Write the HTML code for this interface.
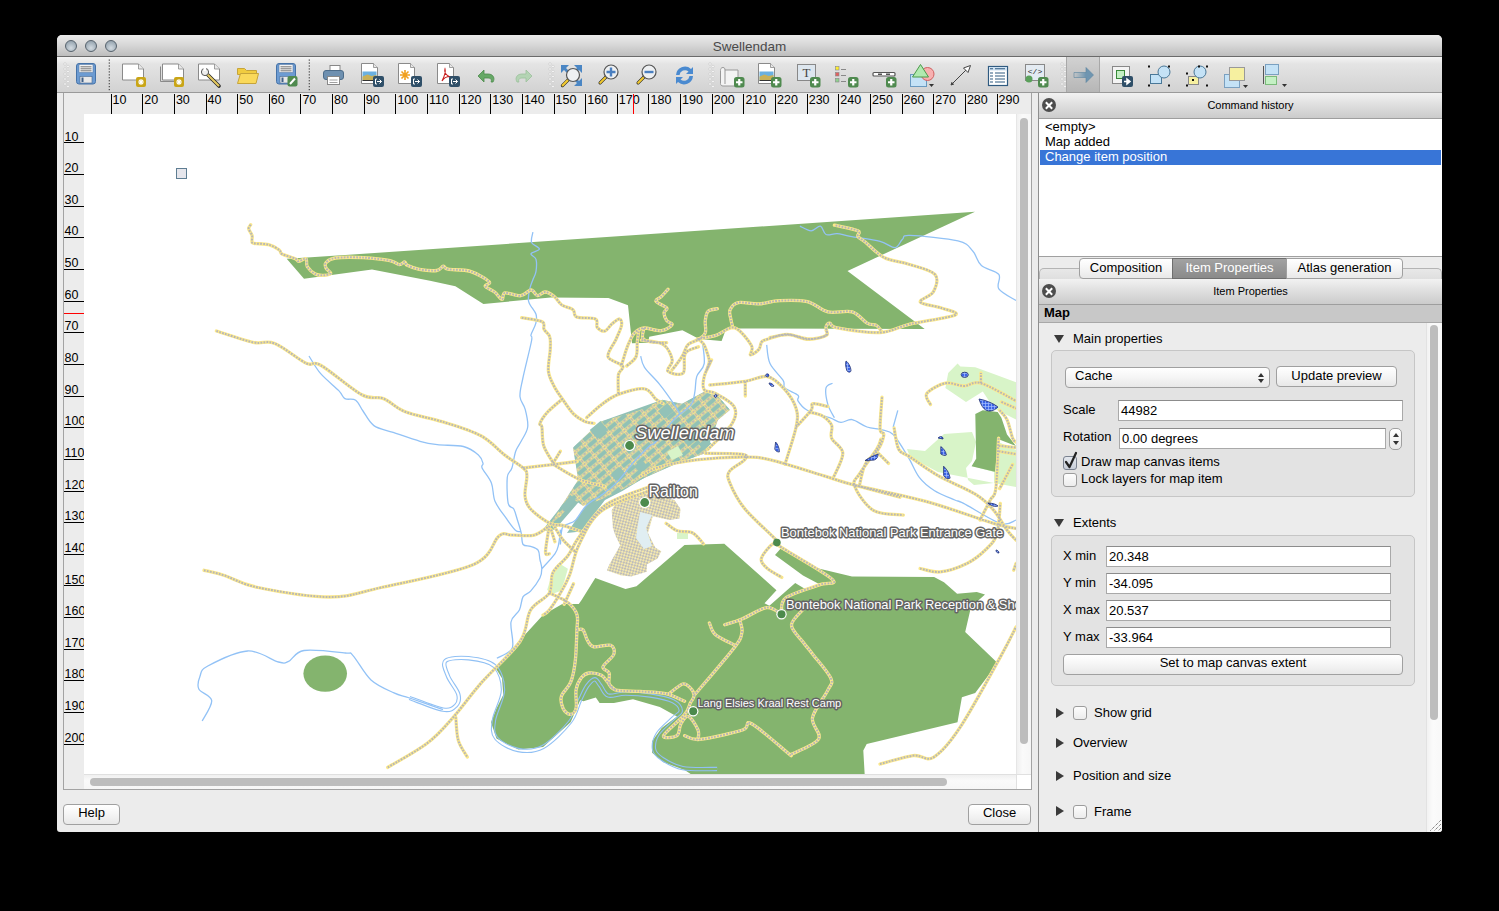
<!DOCTYPE html>
<html><head><meta charset="utf-8">
<style>
*{box-sizing:border-box}
html,body{margin:0;padding:0;width:1499px;height:911px;overflow:hidden;background:#000;font-family:"Liberation Sans",sans-serif;font-size:13px;color:#000}
.a{position:absolute}
#win{position:absolute;left:57px;top:35px;width:1385px;height:797px;background:#ececec;border-radius:5px 5px 3px 3px;overflow:hidden}
#title{position:absolute;left:57px;top:35px;width:1385px;height:22px;background:linear-gradient(#ebebeb,#d6d6d6 50%,#bdbdbd);border-bottom:1px solid #6a6a6a;border-radius:5px 5px 0 0}
#title .t{position:absolute;left:0;width:100%;top:4px;text-align:center;color:#4a4a4a;font-size:13.5px}
.tl{position:absolute;top:5px;width:12px;height:12px;border-radius:50%;background:radial-gradient(circle at 50% 70%,#d3dbe1,#9aa8b3 75%);border:1px solid #56626c}
#tb{position:absolute;left:57px;top:57px;width:1385px;height:36px;background:linear-gradient(#f4f4f4,#e4e4e4 20%,#d2d2d2);border-bottom:1px solid #9a9a9a}
.lbl{position:absolute;white-space:nowrap;line-height:15px}
.btn{position:absolute;border:1px solid #a0a0a0;border-radius:4px;background:linear-gradient(#ffffff,#f6f6f6 45%,#e8e8e8);text-align:center;font-size:13px;line-height:18px}
.inp{position:absolute;background:#fff;border:1px solid #a9a9a9;border-top-color:#8c8c8c;padding-left:2px;line-height:19px;font-size:13px}
.cb{position:absolute;width:14px;height:14px;border:1px solid #9c9c9c;border-radius:3px;background:linear-gradient(#fdfdfd,#ececec)}
.tri-d{position:absolute;width:0;height:0;border-left:5.5px solid transparent;border-right:5.5px solid transparent;border-top:8px solid #3a3a3a}
.tri-r{position:absolute;width:0;height:0;border-top:5.5px solid transparent;border-bottom:5.5px solid transparent;border-left:8px solid #3a3a3a}
.dockhdr{position:absolute;left:1039px;width:403px;background:linear-gradient(#f2f2f2,#dedede 50%,#cbcbcb);border-bottom:1px solid #9e9e9e;text-align:center;font-size:11px;padding-left:20px}
.xbtn{position:absolute;left:3px;width:14px;height:14px;border-radius:50%;background:#4d4d4d}
.xbtn:before,.xbtn:after{content:"";position:absolute;left:6px;top:2.5px;width:2px;height:9px;background:#fff;transform:rotate(45deg)}
.xbtn:after{transform:rotate(-45deg)}
.rn{position:absolute;font-size:12.5px;line-height:13px;white-space:nowrap}
</style></head>
<body>
<div id="win"></div>
<div id="title"><div class="t">Swellendam</div>
  <div class="tl" style="left:8px"></div><div class="tl" style="left:28px"></div><div class="tl" style="left:48px"></div>
</div>
<div id="tb"></div>
<svg class="a" style="left:57px;top:57px" width="1385" height="36" viewBox="57 57 1385 36"><circle cx="65" cy="64" r="1.3" fill="#f8f8f8" stroke="#c4c4c4" stroke-width="0.6"/><circle cx="68" cy="66.5" r="1.3" fill="#f8f8f8" stroke="#c4c4c4" stroke-width="0.6"/><circle cx="65" cy="69" r="1.3" fill="#f8f8f8" stroke="#c4c4c4" stroke-width="0.6"/><circle cx="68" cy="71.5" r="1.3" fill="#f8f8f8" stroke="#c4c4c4" stroke-width="0.6"/><circle cx="65" cy="74" r="1.3" fill="#f8f8f8" stroke="#c4c4c4" stroke-width="0.6"/><circle cx="68" cy="76.5" r="1.3" fill="#f8f8f8" stroke="#c4c4c4" stroke-width="0.6"/><circle cx="65" cy="79" r="1.3" fill="#f8f8f8" stroke="#c4c4c4" stroke-width="0.6"/><circle cx="68" cy="81.5" r="1.3" fill="#f8f8f8" stroke="#c4c4c4" stroke-width="0.6"/><circle cx="65" cy="84" r="1.3" fill="#f8f8f8" stroke="#c4c4c4" stroke-width="0.6"/><circle cx="68" cy="86.5" r="1.3" fill="#f8f8f8" stroke="#c4c4c4" stroke-width="0.6"/><rect x="76.5" y="63.5" width="19" height="20.5" rx="2.5" fill="#6c9bd2" stroke="#4673a8"/><rect x="79" y="64.5" width="14" height="8" fill="#f4f4f4" stroke="#5a7ea8" stroke-width="0.6"/><path d="M80.5 66.8h11M80.5 68.8h11M80.5 70.8h11" stroke="#555" stroke-width="0.8"/><rect x="80" y="76.5" width="12" height="6.5" fill="#e8e8e8" stroke="#4a6a90" stroke-width="0.6"/><rect x="81.5" y="77.5" width="2" height="4.5" fill="#3f5f87"/><rect x="108.7" y="59.5" width="1.2" height="1.2" fill="#444"/><rect x="108.7" y="62.45" width="1.2" height="1.2" fill="#444"/><rect x="108.7" y="65.4" width="1.2" height="1.2" fill="#444"/><rect x="108.7" y="68.35" width="1.2" height="1.2" fill="#444"/><rect x="108.7" y="71.3" width="1.2" height="1.2" fill="#444"/><rect x="108.7" y="74.25" width="1.2" height="1.2" fill="#444"/><rect x="108.7" y="77.2" width="1.2" height="1.2" fill="#444"/><rect x="108.7" y="80.15" width="1.2" height="1.2" fill="#444"/><rect x="108.7" y="83.1" width="1.2" height="1.2" fill="#444"/><rect x="108.7" y="86.05" width="1.2" height="1.2" fill="#444"/><rect x="108.7" y="89.0" width="1.2" height="1.2" fill="#444"/><path d="M122.5 64h16l5 5v11h-21z" fill="#fff" stroke="#8a8a8a" stroke-width="1"/><path d="M138.5 64v5h5" fill="#e8e8e8" stroke="#8a8a8a" stroke-width="0.8"/><rect x="136" y="77" width="10" height="10" rx="2" fill="#c9a516"/><path d="M141 79v6M138 82h6M138.9 79.9l4.2 4.2M143.1 79.9l-4.2 4.2" stroke="#fff" stroke-width="1.1"/><path d="M160.5 66.5v15h18" fill="none" stroke="#8a8a8a"/><path d="M162.5 64h16l5 5v11h-21z" fill="#fff" stroke="#8a8a8a" stroke-width="1"/><path d="M178.5 64v5h5" fill="#e8e8e8" stroke="#8a8a8a" stroke-width="0.8"/><rect x="174" y="77" width="10" height="10" rx="2" fill="#c9a516"/><path d="M179 79v6M176 82h6M176.9 79.9l4.2 4.2M181.1 79.9l-4.2 4.2" stroke="#fff" stroke-width="1.1"/><path d="M198.5 64h16l5 5v11h-21z" fill="#fff" stroke="#8a8a8a" stroke-width="1"/><path d="M214.5 64v5h5" fill="#e8e8e8" stroke="#8a8a8a" stroke-width="0.8"/><path d="M206 73l13 13" stroke="#222" stroke-width="3.6" stroke-linecap="round"/><path d="M207 74l11.5 11.5" stroke="#e4c860" stroke-width="2.2" stroke-linecap="round"/><circle cx="205" cy="72" r="3.6" fill="#eee" stroke="#555"/><rect x="203.5" y="67" width="2.5" height="4" fill="#fff"/><path d="M237.5 68.5h7l2 2h10v4h-19z" fill="#f1cc3f" stroke="#c6a43a"/><path d="M237.5 83.5l3-10h18l-2.5 10z" fill="#fad95a" stroke="#c6a43a"/><rect x="276.5" y="63.5" width="19" height="20.5" rx="2.5" fill="#6c9bd2" stroke="#4673a8"/><rect x="279" y="64.5" width="14" height="8" fill="#f4f4f4" stroke="#5a7ea8" stroke-width="0.6"/><path d="M280.5 66.8h11M280.5 68.8h11M280.5 70.8h11" stroke="#555" stroke-width="0.8"/><rect x="280" y="76.5" width="12" height="6.5" fill="#e8e8e8" stroke="#4a6a90" stroke-width="0.6"/><rect x="281.5" y="77.5" width="2" height="4.5" fill="#3f5f87"/><rect x="287.5" y="76" width="10" height="10.5" rx="2" fill="#4f8a4f"/><path d="M290 84l5-5.5" stroke="#fff" stroke-width="2"/><rect x="308.7" y="59.5" width="1.2" height="1.2" fill="#444"/><rect x="308.7" y="62.45" width="1.2" height="1.2" fill="#444"/><rect x="308.7" y="65.4" width="1.2" height="1.2" fill="#444"/><rect x="308.7" y="68.35" width="1.2" height="1.2" fill="#444"/><rect x="308.7" y="71.3" width="1.2" height="1.2" fill="#444"/><rect x="308.7" y="74.25" width="1.2" height="1.2" fill="#444"/><rect x="308.7" y="77.2" width="1.2" height="1.2" fill="#444"/><rect x="308.7" y="80.15" width="1.2" height="1.2" fill="#444"/><rect x="308.7" y="83.1" width="1.2" height="1.2" fill="#444"/><rect x="308.7" y="86.05" width="1.2" height="1.2" fill="#444"/><rect x="308.7" y="89.0" width="1.2" height="1.2" fill="#444"/><rect x="330" y="65.5" width="10" height="6" fill="#fff" stroke="#888"/><rect x="323.5" y="70.5" width="20" height="9" rx="2.5" fill="#6e90b0" stroke="#4d6c89"/><rect x="327.5" y="76.5" width="12" height="8" fill="#fff" stroke="#888"/><path d="M329.5 80h8M329.5 82.5h8" stroke="#888" stroke-width="0.8"/><path d="M361.5 63.5h12l4 4v16h-16z" fill="#fff" stroke="#8a8a8a" stroke-width="1"/><path d="M373.5 63.5v4h4" fill="#e8e8e8" stroke="#8a8a8a" stroke-width="0.8"/><rect x="362.5" y="71.5" width="14" height="9" fill="#6ab0e0"/><path d="M362.5 80.5v-4l5-2 4 1.5 5-1v5.5z" fill="#c8b058"/><path d="M362.5 80.5h14" stroke="#333"/><rect x="373" y="76" width="11" height="11" rx="2" fill="#2f4f68"/><path d="M377 79h-1.5v5h1.5M377 81.5h4.5M379.5 79.5l2 2-2 2" stroke="#fff" stroke-width="1" fill="none"/><path d="M398.5 63.5h12l4 4v16h-16z" fill="#fff" stroke="#8a8a8a" stroke-width="1"/><path d="M410.5 63.5v4h4" fill="#e8e8e8" stroke="#8a8a8a" stroke-width="0.8"/><g stroke="#f0a020" stroke-width="1.6"><path d="M405 70v10M400 75h10M401.5 71.5l7 7M408.5 71.5l-7 7"/></g><circle cx="405" cy="75" r="1.8" fill="#f0a020"/><rect x="411" y="76" width="11" height="11" rx="2" fill="#2f4f68"/><path d="M415 79h-1.5v5h1.5M415 81.5h4.5M417.5 79.5l2 2-2 2" stroke="#fff" stroke-width="1" fill="none"/><path d="M437.5 63.5h12l4 4v16h-16z" fill="#fff" stroke="#8a8a8a" stroke-width="1"/><path d="M449.5 63.5v4h4" fill="#e8e8e8" stroke="#8a8a8a" stroke-width="0.8"/><path d="M442 81c2-4 4-9 3-12-1 3 1 6 5 8 2 1 3 0 0-.5-3 0-6 1-8 4.5z" fill="none" stroke="#c82020" stroke-width="1.1"/><rect x="449" y="76" width="11" height="11" rx="2" fill="#2f4f68"/><path d="M453 79h-1.5v5h1.5M453 81.5h4.5M455.5 79.5l2 2-2 2" stroke="#fff" stroke-width="1" fill="none"/><path d="M493 82c2-3 1-8-5-8h-4v-4l-6 6 6 6v-4h4c3 0 4 2 3 4z" fill="#66a866" stroke="#4b8a4b" stroke-width="0.8"/><path d="M517 82c-2-3-1-8 5-8h4v-4l6 6-6 6v-4h-4c-3 0-4 2-3 4z" fill="#b4d4b4" stroke="#9cc09c" stroke-width="0.8"/><circle cx="550" cy="64" r="1.3" fill="#f8f8f8" stroke="#c4c4c4" stroke-width="0.6"/><circle cx="553" cy="66.5" r="1.3" fill="#f8f8f8" stroke="#c4c4c4" stroke-width="0.6"/><circle cx="550" cy="69" r="1.3" fill="#f8f8f8" stroke="#c4c4c4" stroke-width="0.6"/><circle cx="553" cy="71.5" r="1.3" fill="#f8f8f8" stroke="#c4c4c4" stroke-width="0.6"/><circle cx="550" cy="74" r="1.3" fill="#f8f8f8" stroke="#c4c4c4" stroke-width="0.6"/><circle cx="553" cy="76.5" r="1.3" fill="#f8f8f8" stroke="#c4c4c4" stroke-width="0.6"/><circle cx="550" cy="79" r="1.3" fill="#f8f8f8" stroke="#c4c4c4" stroke-width="0.6"/><circle cx="553" cy="81.5" r="1.3" fill="#f8f8f8" stroke="#c4c4c4" stroke-width="0.6"/><circle cx="550" cy="84" r="1.3" fill="#f8f8f8" stroke="#c4c4c4" stroke-width="0.6"/><circle cx="553" cy="86.5" r="1.3" fill="#f8f8f8" stroke="#c4c4c4" stroke-width="0.6"/><g fill="#4a86c4"><path d="M561 65h8l-3 3 3 3-2 2-3-3-3 3z"/><path d="M582 65h-8l3 3-3 3 2 2 3-3 3 3z"/><path d="M582 86h-8l3-3-3-3 2-2 3 3 3-3z"/></g><path d="M568.45 79.55l-6 6" stroke="#222" stroke-width="3.2" stroke-linecap="round"/><path d="M567.625 80.375l-5 5" stroke="#f0c830" stroke-width="2.2" stroke-linecap="round"/><circle cx="573" cy="75" r="6.5" fill="#eef0f2" stroke="#555" stroke-width="1.2"/><path d="M606.1 76.9l-6 6" stroke="#222" stroke-width="3.2" stroke-linecap="round"/><path d="M605.25 77.75l-5 5" stroke="#f0c830" stroke-width="2.2" stroke-linecap="round"/><circle cx="611" cy="72" r="7" fill="#eef0f2" stroke="#555" stroke-width="1.2"/><path d="M606.5 72h9M611 67.5v9" stroke="#4a7fc0" stroke-width="2.4"/><path d="M644.1 76.9l-6 6" stroke="#222" stroke-width="3.2" stroke-linecap="round"/><path d="M643.25 77.75l-5 5" stroke="#f0c830" stroke-width="2.2" stroke-linecap="round"/><circle cx="649" cy="72" r="7" fill="#eef0f2" stroke="#555" stroke-width="1.2"/><path d="M644.5 72h9" stroke="#4a7fc0" stroke-width="2.4"/><path d="M676 75a9 9 0 0 1 15-6l2-2v7h-7l2.5-2.5a5.5 5.5 0 0 0-9 3.5z" fill="#4a8ad0"/><path d="M693 76a9 9 0 0 1-15 6l-2 2v-7h7l-2.5 2.5a5.5 5.5 0 0 0 9-3.5z" fill="#4a8ad0"/><circle cx="710" cy="64" r="1.3" fill="#f8f8f8" stroke="#c4c4c4" stroke-width="0.6"/><circle cx="713" cy="66.5" r="1.3" fill="#f8f8f8" stroke="#c4c4c4" stroke-width="0.6"/><circle cx="710" cy="69" r="1.3" fill="#f8f8f8" stroke="#c4c4c4" stroke-width="0.6"/><circle cx="713" cy="71.5" r="1.3" fill="#f8f8f8" stroke="#c4c4c4" stroke-width="0.6"/><circle cx="710" cy="74" r="1.3" fill="#f8f8f8" stroke="#c4c4c4" stroke-width="0.6"/><circle cx="713" cy="76.5" r="1.3" fill="#f8f8f8" stroke="#c4c4c4" stroke-width="0.6"/><circle cx="710" cy="79" r="1.3" fill="#f8f8f8" stroke="#c4c4c4" stroke-width="0.6"/><circle cx="713" cy="81.5" r="1.3" fill="#f8f8f8" stroke="#c4c4c4" stroke-width="0.6"/><circle cx="710" cy="84" r="1.3" fill="#f8f8f8" stroke="#c4c4c4" stroke-width="0.6"/><circle cx="713" cy="86.5" r="1.3" fill="#f8f8f8" stroke="#c4c4c4" stroke-width="0.6"/><path d="M723 67.5c-2 0-2.5 1.5-2.5 3v13c0 1.5 1 2.5 2.5 2.5h15v-16h-13" fill="#f4f4f4" stroke="#999"/><path d="M723 67.5c1.5 0 2 1 2 2.5v14" fill="none" stroke="#999"/><rect x="734" y="77" width="10.5" height="10.5" rx="2.5" fill="#4f8a4f"/><path d="M739.25 79v6.5M736 82.25h6.5" stroke="#fff" stroke-width="2.2"/><path d="M758.5 63.5h12l4 4v16h-16z" fill="#fff" stroke="#8a8a8a" stroke-width="1"/><path d="M770.5 63.5v4h4" fill="#e8e8e8" stroke="#8a8a8a" stroke-width="0.8"/><rect x="759.5" y="71.5" width="14" height="9" fill="#6ab0e0"/><path d="M759.5 80.5v-4l5-2 4 1.5 5-1v5.5z" fill="#c8b058"/><path d="M759.5 80.5h14" stroke="#333"/><rect x="771" y="77" width="10.5" height="10.5" rx="2.5" fill="#4f8a4f"/><path d="M776.25 79v6.5M773 82.25h6.5" stroke="#fff" stroke-width="2.2"/><rect x="797.5" y="64.5" width="18" height="16" fill="#dde6ee" stroke="#888"/><text x="806.5" y="77" font-family="Liberation Serif" font-size="13" text-anchor="middle" fill="#444">T</text><rect x="810" y="77" width="10.5" height="10.5" rx="2.5" fill="#4f8a4f"/><path d="M815.25 79v6.5M812 82.25h6.5" stroke="#fff" stroke-width="2.2"/><rect x="835.5" y="66.5" width="3.5" height="3.5" fill="#ffee30" stroke="#888" stroke-width="0.6"/><rect x="835.5" y="72.5" width="3.5" height="3.5" fill="#e06060" stroke="#888" stroke-width="0.6"/><rect x="835.5" y="78.5" width="3.5" height="3.5" fill="#90d090" stroke="#888" stroke-width="0.6"/><path d="M841 69.5h5M841 75.5h5M841 81.5h5" stroke="#888" stroke-width="1"/><rect x="848" y="77" width="10.5" height="10.5" rx="2.5" fill="#4f8a4f"/><path d="M853.25 79v6.5M850 82.25h6.5" stroke="#fff" stroke-width="2.2"/><rect x="873" y="72.5" width="22" height="3.5" rx="1" fill="#fff" stroke="#555" stroke-width="1.2"/><path d="M878 74.2h4M886 74.2h4" stroke="#555" stroke-width="1.6"/><rect x="886" y="77" width="10.5" height="10.5" rx="2.5" fill="#4f8a4f"/><path d="M891.25 79v6.5M888 82.25h6.5" stroke="#fff" stroke-width="2.2"/><rect x="910.5" y="74.5" width="16" height="12" fill="#c4e2f6" stroke="#6a9ac0"/><circle cx="927.5" cy="74" r="6.5" fill="#f7b0b0" stroke="#d06060"/><path d="M920.5 64.5l-8 12.5h16z" fill="#b0eab0" stroke="#4a9a4a"/><path d="M929 84h5l-2.5 3z" fill="#333"/><path d="M951 85l19-19" stroke="#444" stroke-width="1"/><path d="M970.5 65.5l-7 2.5 4.5 4.5z" fill="#fff" stroke="#444"/><path d="M951 85l3-1M951 85l1-3" stroke="#444"/><rect x="988.5" y="66.5" width="19" height="19" fill="#fff" stroke="#2f5a80" stroke-width="1.2"/><rect x="989" y="67" width="18" height="3.5" fill="#cfe2f2"/><path d="M990 68.8h3M995 68.8h10M990 73h3M995 73h10M990 76h3M995 76h10M990 79h3M995 79h10M990 82h3M995 82h10" stroke="#2f5a80" stroke-width="1.1"/><rect x="1025.5" y="64.5" width="19" height="16" fill="#e4ebf2" stroke="#888"/><text x="1035" y="74" font-family="Liberation Mono" font-size="8" text-anchor="middle" fill="#222">&lt;/&gt;</text><circle cx="1029" cy="79" r="3.5" fill="#5aa05a"/><rect x="1038" y="77" width="10.5" height="10.5" rx="2.5" fill="#4f8a4f"/><path d="M1043.25 79v6.5M1040 82.25h6.5" stroke="#fff" stroke-width="2.2"/><circle cx="1062" cy="64" r="1.3" fill="#f8f8f8" stroke="#c4c4c4" stroke-width="0.6"/><circle cx="1065" cy="66.5" r="1.3" fill="#f8f8f8" stroke="#c4c4c4" stroke-width="0.6"/><circle cx="1062" cy="69" r="1.3" fill="#f8f8f8" stroke="#c4c4c4" stroke-width="0.6"/><circle cx="1065" cy="71.5" r="1.3" fill="#f8f8f8" stroke="#c4c4c4" stroke-width="0.6"/><circle cx="1062" cy="74" r="1.3" fill="#f8f8f8" stroke="#c4c4c4" stroke-width="0.6"/><circle cx="1065" cy="76.5" r="1.3" fill="#f8f8f8" stroke="#c4c4c4" stroke-width="0.6"/><circle cx="1062" cy="79" r="1.3" fill="#f8f8f8" stroke="#c4c4c4" stroke-width="0.6"/><circle cx="1065" cy="81.5" r="1.3" fill="#f8f8f8" stroke="#c4c4c4" stroke-width="0.6"/><circle cx="1062" cy="84" r="1.3" fill="#f8f8f8" stroke="#c4c4c4" stroke-width="0.6"/><circle cx="1065" cy="86.5" r="1.3" fill="#f8f8f8" stroke="#c4c4c4" stroke-width="0.6"/><rect x="1066" y="57" width="34" height="35" fill="url(#prs)"/><path d="M1066.5 57v35M1099.5 57v35" stroke="#a8a8a8"/><defs><linearGradient id="prs" x1="0" y1="0" x2="0" y2="1"><stop offset="0" stop-color="#d2d2d2"/><stop offset="1" stop-color="#b6b6b6"/></linearGradient><linearGradient id="arr" x1="0" x2="1"><stop offset="0" stop-color="#7da2ba" stop-opacity="0"/><stop offset="0.6" stop-color="#6f95b0"/></linearGradient></defs><path d="M1074 72.5h12v-5l7.5 7.5-7.5 7.5v-5h-12z" fill="url(#arr)" stroke="#5b84a0" stroke-width="0.6"/><rect x="1112.5" y="66.5" width="17" height="17" fill="#f4f4f4" stroke="#888"/><rect x="1116.5" y="70.5" width="8" height="8" fill="#c4f0c4" stroke="#3a8a3a"/><rect x="1122" y="76" width="11" height="11" rx="2" fill="#2f4f68"/><path d="M1124 81.5h4M1127 79l3 2.5-3 2.5z" stroke="#fff" fill="#fff" stroke-width="1.5"/><rect x="1150.5" y="74.5" width="11" height="9" fill="#c4e2f6" stroke="#4a7898"/><circle cx="1164" cy="72" r="6" fill="#c4e2f6" stroke="#4a7898"/><g fill="#111"><rect x="1148" y="65.5" width="2" height="2"/><rect x="1168" y="65.5" width="2" height="2"/><rect x="1148" y="84.5" width="2" height="2"/><rect x="1168" y="84.5" width="2" height="2"/></g><rect x="1188.5" y="76.5" width="10" height="8" fill="#f6f0a0" stroke="#888"/><circle cx="1200" cy="72" r="6" fill="#c4e2f6" stroke="#4a7898"/><g fill="#111"><rect x="1186" y="72.5" width="2" height="2"/><rect x="1206" y="65.5" width="2" height="2"/><rect x="1186" y="84.5" width="2" height="2"/><rect x="1206" y="84.5" width="2" height="2"/><rect x="1192" y="79" width="2" height="2"/><rect x="1198" y="65.5" width="2" height="2"/></g><rect x="1224.5" y="74.5" width="15" height="13" fill="#c4e2f6" stroke="#7aa0c0"/><rect x="1229.5" y="67.5" width="15" height="13" fill="#f6f0a0" stroke="#999"/><path d="M1243 85h5l-2.5 3z" fill="#333"/><path d="M1263.5 66v18" stroke="#555"/><rect x="1265.5" y="64.5" width="13" height="10" fill="#c4e2f6" stroke="#7aa0c0"/><rect x="1265.5" y="76.5" width="11" height="8" fill="#c4f0c4" stroke="#7aba7a"/><path d="M1282 84h5l-2.5 3z" fill="#333"/></svg>

<!-- canvas frame -->
<div class="a" style="left:63px;top:93px;width:969px;height:697px;border:1px solid #a3a3a3;border-top:none;background:#ececec"></div>
<div class="a" id="hruler" style="left:64px;top:93px;width:967px;height:21px;background:#ececec"></div>
<div class="a" id="vruler" style="left:64px;top:114px;width:20px;height:660px;background:#ececec"></div>
<div class="a" style="left:111px;top:94px;width:1px;height:20px;background:#000"></div>
<div class="rn" style="left:112.6px;top:94px">10</div>
<div class="a" style="left:142px;top:94px;width:1px;height:20px;background:#000"></div>
<div class="rn" style="left:144.2px;top:94px">20</div>
<div class="a" style="left:174px;top:94px;width:1px;height:20px;background:#000"></div>
<div class="rn" style="left:175.9px;top:94px">30</div>
<div class="a" style="left:206px;top:94px;width:1px;height:20px;background:#000"></div>
<div class="rn" style="left:207.5px;top:94px">40</div>
<div class="a" style="left:237px;top:94px;width:1px;height:20px;background:#000"></div>
<div class="rn" style="left:239.2px;top:94px">50</div>
<div class="a" style="left:269px;top:94px;width:1px;height:20px;background:#000"></div>
<div class="rn" style="left:270.8px;top:94px">60</div>
<div class="a" style="left:300px;top:94px;width:1px;height:20px;background:#000"></div>
<div class="rn" style="left:302.4px;top:94px">70</div>
<div class="a" style="left:332px;top:94px;width:1px;height:20px;background:#000"></div>
<div class="rn" style="left:334.1px;top:94px">80</div>
<div class="a" style="left:364px;top:94px;width:1px;height:20px;background:#000"></div>
<div class="rn" style="left:365.7px;top:94px">90</div>
<div class="a" style="left:395px;top:94px;width:1px;height:20px;background:#000"></div>
<div class="rn" style="left:397.4px;top:94px">100</div>
<div class="a" style="left:427px;top:94px;width:1px;height:20px;background:#000"></div>
<div class="rn" style="left:429.0px;top:94px">110</div>
<div class="a" style="left:459px;top:94px;width:1px;height:20px;background:#000"></div>
<div class="rn" style="left:460.6px;top:94px">120</div>
<div class="a" style="left:490px;top:94px;width:1px;height:20px;background:#000"></div>
<div class="rn" style="left:492.3px;top:94px">130</div>
<div class="a" style="left:522px;top:94px;width:1px;height:20px;background:#000"></div>
<div class="rn" style="left:523.9px;top:94px">140</div>
<div class="a" style="left:554px;top:94px;width:1px;height:20px;background:#000"></div>
<div class="rn" style="left:555.6px;top:94px">150</div>
<div class="a" style="left:585px;top:94px;width:1px;height:20px;background:#000"></div>
<div class="rn" style="left:587.2px;top:94px">160</div>
<div class="a" style="left:617px;top:94px;width:1px;height:20px;background:#000"></div>
<div class="rn" style="left:618.8px;top:94px">170</div>
<div class="a" style="left:648px;top:94px;width:1px;height:20px;background:#000"></div>
<div class="rn" style="left:650.5px;top:94px">180</div>
<div class="a" style="left:680px;top:94px;width:1px;height:20px;background:#000"></div>
<div class="rn" style="left:682.1px;top:94px">190</div>
<div class="a" style="left:712px;top:94px;width:1px;height:20px;background:#000"></div>
<div class="rn" style="left:713.8px;top:94px">200</div>
<div class="a" style="left:743px;top:94px;width:1px;height:20px;background:#000"></div>
<div class="rn" style="left:745.4px;top:94px">210</div>
<div class="a" style="left:775px;top:94px;width:1px;height:20px;background:#000"></div>
<div class="rn" style="left:777.0px;top:94px">220</div>
<div class="a" style="left:807px;top:94px;width:1px;height:20px;background:#000"></div>
<div class="rn" style="left:808.7px;top:94px">230</div>
<div class="a" style="left:838px;top:94px;width:1px;height:20px;background:#000"></div>
<div class="rn" style="left:840.3px;top:94px">240</div>
<div class="a" style="left:870px;top:94px;width:1px;height:20px;background:#000"></div>
<div class="rn" style="left:872.0px;top:94px">250</div>
<div class="a" style="left:902px;top:94px;width:1px;height:20px;background:#000"></div>
<div class="rn" style="left:903.6px;top:94px">260</div>
<div class="a" style="left:933px;top:94px;width:1px;height:20px;background:#000"></div>
<div class="rn" style="left:935.2px;top:94px">270</div>
<div class="a" style="left:965px;top:94px;width:1px;height:20px;background:#000"></div>
<div class="rn" style="left:966.9px;top:94px">280</div>
<div class="a" style="left:997px;top:94px;width:1px;height:20px;background:#000"></div>
<div class="rn" style="left:998.5px;top:94px">290</div>
<div class="a" style="left:633px;top:94px;width:1px;height:20px;background:#f00"></div>
<div class="a" style="left:64px;top:142px;width:20px;height:1px;background:#000"></div>
<div class="rn" style="left:64.5px;top:130.5px">10</div>
<div class="a" style="left:64px;top:174px;width:20px;height:1px;background:#000"></div>
<div class="rn" style="left:64.5px;top:162.1px">20</div>
<div class="a" style="left:64px;top:206px;width:20px;height:1px;background:#000"></div>
<div class="rn" style="left:64.5px;top:193.8px">30</div>
<div class="a" style="left:64px;top:237px;width:20px;height:1px;background:#000"></div>
<div class="rn" style="left:64.5px;top:225.4px">40</div>
<div class="a" style="left:64px;top:269px;width:20px;height:1px;background:#000"></div>
<div class="rn" style="left:64.5px;top:257.1px">50</div>
<div class="a" style="left:64px;top:301px;width:20px;height:1px;background:#000"></div>
<div class="rn" style="left:64.5px;top:288.7px">60</div>
<div class="a" style="left:64px;top:332px;width:20px;height:1px;background:#000"></div>
<div class="rn" style="left:64.5px;top:320.3px">70</div>
<div class="a" style="left:64px;top:364px;width:20px;height:1px;background:#000"></div>
<div class="rn" style="left:64.5px;top:352.0px">80</div>
<div class="a" style="left:64px;top:396px;width:20px;height:1px;background:#000"></div>
<div class="rn" style="left:64.5px;top:383.6px">90</div>
<div class="a" style="left:64px;top:427px;width:20px;height:1px;background:#000"></div>
<div class="rn" style="left:64.5px;top:415.3px">100</div>
<div class="a" style="left:64px;top:459px;width:20px;height:1px;background:#000"></div>
<div class="rn" style="left:64.5px;top:446.9px">110</div>
<div class="a" style="left:64px;top:491px;width:20px;height:1px;background:#000"></div>
<div class="rn" style="left:64.5px;top:478.5px">120</div>
<div class="a" style="left:64px;top:522px;width:20px;height:1px;background:#000"></div>
<div class="rn" style="left:64.5px;top:510.2px">130</div>
<div class="a" style="left:64px;top:554px;width:20px;height:1px;background:#000"></div>
<div class="rn" style="left:64.5px;top:541.8px">140</div>
<div class="a" style="left:64px;top:585px;width:20px;height:1px;background:#000"></div>
<div class="rn" style="left:64.5px;top:573.5px">150</div>
<div class="a" style="left:64px;top:617px;width:20px;height:1px;background:#000"></div>
<div class="rn" style="left:64.5px;top:605.1px">160</div>
<div class="a" style="left:64px;top:649px;width:20px;height:1px;background:#000"></div>
<div class="rn" style="left:64.5px;top:636.7px">170</div>
<div class="a" style="left:64px;top:680px;width:20px;height:1px;background:#000"></div>
<div class="rn" style="left:64.5px;top:668.4px">180</div>
<div class="a" style="left:64px;top:712px;width:20px;height:1px;background:#000"></div>
<div class="rn" style="left:64.5px;top:700.0px">190</div>
<div class="a" style="left:64px;top:744px;width:20px;height:1px;background:#000"></div>
<div class="rn" style="left:64.5px;top:731.7px">200</div>
<div class="a" style="left:64px;top:313px;width:20px;height:1px;background:#f00"></div>
<div class="a" style="left:84px;top:114px;width:932px;height:660px;background:#fff;overflow:hidden"><svg width="932" height="660" viewBox="84 114 932 660" style="position:absolute;left:0;top:0">
<defs>
<pattern id="townp" patternUnits="userSpaceOnUse" width="13" height="7.5" patternTransform="rotate(-40)">
<rect width="13" height="7.5" fill="#91c1b6"/>
<path d="M0 3.7h13M6.5 0v7.5" stroke="#fbe88c" stroke-width="2.8"/>
<path d="M0 3.7h13" stroke="#b6b6b8" stroke-width="1.7" stroke-dasharray="1.6 1.3"/>
<path d="M6.5 0v7.5" stroke="#b6b6b8" stroke-width="1.7" stroke-dasharray="1.6 1.3"/>
</pattern>
<pattern id="railp" patternUnits="userSpaceOnUse" width="4" height="4" patternTransform="rotate(-30)">
<rect width="4" height="4" fill="#f6e8a8"/>
<circle cx="1" cy="1" r="1.1" fill="#b8b8bc"/><circle cx="3" cy="3" r="1.1" fill="#b8b8bc"/><circle cx="3" cy="1" r="0.6" fill="#e4eef0"/>
</pattern>
<pattern id="waterp" patternUnits="userSpaceOnUse" width="3" height="3">
<rect width="3" height="3" fill="#3c64e6"/><path d="M0 1.5h3M1.5 0v3" stroke="#a8c0ff" stroke-width="0.7"/>
</pattern>
</defs>
<polygon points="957.6,363.6 960.4,366.4 975.3,367.3 995.8,374.8 1016.0,382.3 1016.0,419.6 994.0,408.4 982.8,391.6 966.0,401.9 945.4,387.9 948.2,372.9" fill="#d8f4c8"/>
<polygon points="907.0,449.0 925.0,451.0 944.0,434.0 972.0,432.0 976.0,442.0 972.0,461.0 966.0,468.0 968.0,480.0 974.0,485.0 994.0,483.0 1016.0,487.0 1016.0,450.0 994.0,440.0 976.0,459.0 972.0,466.0 994.0,472.0 994.0,483.0 938.0,472.0 910.0,457.0" fill="#d8f4c8"/>
<polygon points="558.6,563.1 567.9,568.7 564.2,581.8 560.4,591.1 549.3,594.9 547.4,589.3 553.0,570.6" fill="#d8f4c8"/>
<rect x="820" y="575" width="10" height="9" fill="#d8f4c8"/><rect x="677" y="533" width="11" height="6" fill="#d8f4c8"/>
<polygon points="286.7,258.7 307.3,257.6 975.0,211.8 847.5,270.9 924.7,329.0 726.2,328.4 721.6,340.9 699.2,339.0 682.4,330.2 649.3,336.7 648.0,342.7 632.0,343.3 628.0,305.3 608.4,297.9 550.6,297.5 483.4,304.0 455.4,286.3 430.0,280.7 372.0,269.6 304.0,278.7" fill="#84b46e"/>
<polygon points="495.1,667.3 543.0,615.0 562.3,604.0 578.8,604.0 581.6,600.0 595.3,578.0 625.5,589.0 636.5,586.3 684.5,545.1 724.3,543.7 776.5,590.2 764.5,603.3 769.4,605.7 795.2,583.0 805.6,589.3 819.0,584.0 803.0,575.5 775.0,555.0 780.5,548.8 817.6,568.3 852.0,576.5 934.1,577.0 944.0,582.3 957.1,593.8 976.8,592.1 985.0,594.6 971.0,607.0 965.2,632.0 997.6,663.1 975.2,693.1 961.9,697.2 957.5,722.2 866.7,743.9 863.3,750.6 865.0,780.0 699.9,780.0 684.6,770.0 663.6,762.3 652.1,752.8 652.1,741.3 661.7,728.0 677.0,716.5 659.8,707.0 633.0,699.3 613.9,703.1 599.6,703.1 595.8,697.4 583.4,701.2 580.2,700.2 570.6,722.2 543.1,746.9 518.4,749.6 496.5,738.6 491.0,722.2 496.5,708.4 503.3,694.7 502.0,678.2" fill="#84b46e"/>
<polygon points="975.3,414.0 982.8,410.3 997.7,412.1 1001.4,417.7 1007.0,434.5 1016.0,446.0 998.6,439.2 994.9,471.8 971.6,466.2 976.2,458.8" fill="#84b46e"/>
<ellipse cx="325.2" cy="673.6" rx="21.8" ry="18.2" fill="#84b46e"/>
<polygon points="541.7,531.2 560.0,508.0 579.3,482.8 575.3,459.0 573.4,447.2 601.0,421.5 662.3,399.8 682.0,403.7 703.8,391.9 717.6,395.8 729.5,409.6 717.6,419.5 705.8,453.0 678.0,463.0 642.5,478.8 622.8,490.7 605.0,500.0 581.0,531.4 567.0,533.0 586.6,504.4 579.1,501.6 554.9,529.6" fill="#91c1b6"/>
<polygon points="573.0,448.0 600.0,422.0 640.0,410.0 662.0,400.0 682.0,404.0 704.0,392.0 718.0,396.0 730.0,410.0 718.0,420.0 706.0,453.0 680.0,462.0 650.0,475.0 625.0,488.0 600.0,500.0 583.0,506.0 572.0,498.0 566.0,510.0 556.0,522.0 548.0,528.0 562.0,505.0 578.0,480.0 576.0,466.0" fill="url(#townp)"/>
<rect x="592" y="424" width="14" height="12" fill="#92c2b8" transform="rotate(-40 599.0 430.0)"/>
<rect x="636" y="462" width="10" height="9" fill="#92c2b8" transform="rotate(-40 641.0 466.5)"/>
<rect x="660" y="406" width="12" height="10" fill="#92c2b8" transform="rotate(-40 666.0 411.0)"/>
<rect x="684" y="434" width="14" height="9" fill="#92c2b8" transform="rotate(-40 691.0 438.5)"/>
<rect x="560" y="500" width="16" height="7" fill="#92c2b8" transform="rotate(-50 568.0 503.5)"/>
<rect x="612" y="470" width="12" height="8" fill="#92c2b8" transform="rotate(-40 618.0 474.0)"/>
<rect x="700" y="440" width="10" height="8" fill="#92c2b8" transform="rotate(-40 705.0 444.0)"/>
<polygon points="667,452 678,446 683,455 672,460" fill="#d8f4c8"/>
<polygon points="640.0,512.0 652.0,515.0 646.0,528.0 652.0,546.0 644.0,549.0 636.0,538.0 638.0,524.0" fill="#e0eef2"/>
<polygon points="616.6,501.7 629.9,494.5 646.8,493.3 674.5,499.9 680.6,509.0 679.4,518.6 669.7,519.9 662.5,518.6 652.8,516.2 648.0,533.1 655.2,547.6 661.3,551.3 657.6,558.5 646.8,564.5 646.8,571.8 631.1,576.6 621.4,575.4 606.9,570.6 609.3,564.5 620.2,545.2 615.4,535.6 612.9,528.3 611.7,510.2" fill="url(#railp)"/>
<polygon points="640.0,512.0 652.0,515.0 646.0,528.0 652.0,546.0 644.0,549.0 636.0,538.0 638.0,524.0" fill="#e0eef2"/>
<mask id="rmask" maskUnits="userSpaceOnUse" x="84" y="114" width="932" height="660"><rect x="84" y="114" width="932" height="660" fill="#fff"/><path d="M409.5 698.0 C415.1 699.9 435.3 708.3 443.0 709.6 C450.7 710.9 453.2 708.3 455.8 705.7 C458.4 703.1 459.6 699.1 458.3 694.2 C457.0 689.3 450.1 681.8 448.0 676.2 C445.9 670.6 442.1 663.8 445.5 660.8 C448.9 657.8 460.5 657.4 468.6 658.2 C476.7 659.1 488.6 660.6 494.3 665.9 C500.0 671.2 503.1 681.0 503.0 690.0 C502.9 699.0 495.2 712.0 494.0 720.0 C492.8 728.0 492.0 733.0 496.0 738.0 C500.0 743.0 510.2 748.5 518.0 750.0 C525.8 751.5 534.3 751.7 543.0 747.0 C551.7 742.3 563.8 729.8 570.0 722.0 C576.2 714.2 577.1 706.0 580.0 700.0 C582.9 694.0 584.7 689.4 587.2 685.9 C589.7 682.4 592.6 679.3 594.8 679.3 C597.0 679.3 598.4 683.2 600.6 685.9 C602.8 688.6 604.1 694.2 608.2 695.5 C612.3 696.8 618.4 693.6 625.4 693.6 C632.4 693.6 642.2 694.2 650.2 695.5 C658.2 696.8 668.0 698.7 673.1 701.2 C678.2 703.8 680.8 707.9 680.8 710.8 C680.8 713.7 676.9 714.6 673.1 718.4 C669.3 722.2 661.1 728.6 657.9 733.7 C654.7 738.8 653.4 744.9 654.0 749.0 C654.6 753.1 656.9 755.3 661.7 758.5 C666.5 761.7 673.5 766.4 682.7 768.1 C691.9 769.9 711.4 768.9 717.1 769.0" fill="none" stroke="#000" stroke-width="2.2" stroke-linejoin="round"/></mask>
<path d="M409.5 698.0 C415.1 699.9 435.3 708.3 443.0 709.6 C450.7 710.9 453.2 708.3 455.8 705.7 C458.4 703.1 459.6 699.1 458.3 694.2 C457.0 689.3 450.1 681.8 448.0 676.2 C445.9 670.6 442.1 663.8 445.5 660.8 C448.9 657.8 460.5 657.4 468.6 658.2 C476.7 659.1 488.6 660.6 494.3 665.9 C500.0 671.2 503.1 681.0 503.0 690.0 C502.9 699.0 495.2 712.0 494.0 720.0 C492.8 728.0 492.0 733.0 496.0 738.0 C500.0 743.0 510.2 748.5 518.0 750.0 C525.8 751.5 534.3 751.7 543.0 747.0 C551.7 742.3 563.8 729.8 570.0 722.0 C576.2 714.2 577.1 706.0 580.0 700.0 C582.9 694.0 584.7 689.4 587.2 685.9 C589.7 682.4 592.6 679.3 594.8 679.3 C597.0 679.3 598.4 683.2 600.6 685.9 C602.8 688.6 604.1 694.2 608.2 695.5 C612.3 696.8 618.4 693.6 625.4 693.6 C632.4 693.6 642.2 694.2 650.2 695.5 C658.2 696.8 668.0 698.7 673.1 701.2 C678.2 703.8 680.8 707.9 680.8 710.8 C680.8 713.7 676.9 714.6 673.1 718.4 C669.3 722.2 661.1 728.6 657.9 733.7 C654.7 738.8 653.4 744.9 654.0 749.0 C654.6 753.1 656.9 755.3 661.7 758.5 C666.5 761.7 673.5 766.4 682.7 768.1 C691.9 769.9 711.4 768.9 717.1 769.0" fill="none" stroke="#90c0f4" stroke-width="4.4" stroke-linejoin="round" mask="url(#rmask)"/>
<path d="M532.9 232.2 C532.7 233.9 530.5 239.7 531.6 242.5 C532.7 245.3 539.5 247.1 539.4 249.0 C539.3 250.9 531.6 252.0 531.0 253.7 C530.4 255.4 535.2 256.4 536.0 259.3 C536.8 262.2 536.5 268.0 536.0 271.4 C535.5 274.8 533.9 277.0 532.9 279.8 C531.9 282.6 530.7 284.6 530.0 288.2 C529.3 291.8 527.6 296.9 528.6 301.3 C529.6 305.7 534.8 310.6 536.0 314.3 C537.2 318.0 536.5 320.3 535.7 323.7 C534.9 327.1 531.7 332.0 531.0 334.9 C530.3 337.8 532.9 333.6 531.5 341.0 C530.1 348.4 524.6 369.7 522.7 379.0 C520.8 388.3 519.6 391.6 520.0 396.7 C520.4 401.8 523.9 404.2 525.2 409.3 C526.5 414.4 528.4 421.7 527.7 427.0 C527.1 432.3 523.3 437.0 521.3 441.0 C519.3 445.0 517.3 446.7 515.7 451.2 C514.1 455.7 513.3 463.6 511.9 468.0 C510.5 472.4 507.9 471.4 507.3 477.3 C506.7 483.2 507.1 498.1 508.2 503.4 C509.3 508.7 512.2 506.2 513.8 509.0 C515.3 511.8 516.2 516.2 517.5 520.2 C518.8 524.2 520.4 529.2 521.3 533.3 C522.2 537.3 521.5 542.3 523.1 544.5 C524.7 546.7 528.1 545.4 530.6 546.3 C533.1 547.2 536.6 547.9 538.1 550.1 C539.6 552.3 539.3 556.3 539.9 559.4 C540.5 562.5 541.8 565.6 541.8 568.7 C541.8 571.8 541.8 574.3 539.9 578.0 C538.0 581.7 533.4 588.0 530.6 591.1 C527.8 594.2 525.0 593.6 523.1 596.7 C521.2 599.9 521.4 605.8 519.4 610.0 C517.4 614.2 512.2 615.7 511.0 622.0 C509.8 628.3 514.6 641.9 512.3 647.9 C509.9 653.9 499.5 656.5 496.9 658.2 M309.0 356.0 C310.9 358.9 315.7 367.9 320.7 373.7 C325.7 379.5 334.8 386.5 338.8 390.6 C342.8 394.8 342.1 397.0 344.9 398.6 C347.7 400.2 352.7 398.1 355.7 400.2 C358.7 402.3 360.0 406.8 363.0 411.0 C366.0 415.2 368.9 422.0 373.9 425.6 C378.9 429.2 385.5 429.8 393.2 432.4 C400.9 435.0 412.6 439.2 420.0 441.3 C427.4 443.4 430.1 443.8 437.3 444.7 C444.5 445.6 456.5 444.8 463.4 446.5 C470.2 448.2 475.1 452.1 478.4 454.9 C481.7 457.7 482.4 461.1 483.0 463.3 C483.6 465.5 480.7 464.7 482.1 468.0 C483.5 471.3 489.2 477.3 491.4 482.9 C493.6 488.5 492.6 495.7 495.1 501.6 C497.6 507.5 502.9 513.6 506.3 518.4 C509.7 523.2 513.2 528.3 515.7 530.5 C518.2 532.7 520.4 531.2 521.3 531.4 M560.4 544.5 C560.7 541.7 561.0 531.1 562.3 527.7 C563.5 524.3 565.7 525.2 567.9 524.0 C570.1 522.8 572.3 523.3 575.4 520.2 C578.5 517.1 582.2 509.5 586.6 505.3 C591.0 501.1 596.5 498.7 601.5 495.0 C606.5 491.3 610.8 488.6 616.4 482.9 C622.0 477.1 629.5 466.7 635.1 460.5 C640.7 454.3 646.6 448.7 650.0 445.6 C653.4 442.5 652.3 445.7 655.7 442.0 C659.1 438.3 666.9 427.7 670.6 423.3 C674.3 418.9 674.6 418.9 678.0 415.8 C681.4 412.7 688.3 408.6 691.1 404.6 C693.9 400.6 694.0 396.3 694.9 391.6 C695.8 386.9 695.2 381.3 696.7 376.6 C698.2 371.9 703.3 369.5 704.2 363.6 C705.1 357.7 702.6 344.9 702.3 341.2 M560.4 529.6 C560.1 532.1 559.5 540.5 558.6 544.5 C557.7 548.5 557.7 549.8 554.9 553.8 C552.1 557.8 544.0 566.2 541.8 568.7 M640.7 356.1 C641.3 358.0 641.4 362.6 644.5 367.3 C647.6 372.0 654.4 377.9 659.4 384.1 C664.4 390.3 670.9 399.6 674.3 404.6 C677.7 409.6 679.0 412.4 679.9 414.0 M766.7 344.9 C767.2 348.0 767.3 357.7 770.0 363.6 C772.7 369.5 780.6 376.3 783.1 380.4 C785.6 384.4 782.4 385.4 784.9 387.9 C787.4 390.4 795.8 393.1 798.0 395.3 C800.2 397.5 796.5 398.4 798.0 400.9 C799.5 403.4 802.0 407.5 807.3 410.3 C812.6 413.1 824.1 415.7 829.7 417.7 C835.3 419.7 837.2 422.1 840.9 422.4 C844.6 422.7 847.8 418.8 852.1 419.6 C856.5 420.4 862.0 425.3 867.0 427.0 C872.0 428.7 877.6 428.6 882.0 429.9 C886.4 431.1 888.9 430.0 893.2 434.5 C897.6 439.0 903.8 449.8 908.1 456.9 C912.5 464.0 914.9 471.8 919.3 477.4 C923.6 483.0 928.3 486.7 934.2 490.5 C940.1 494.3 949.9 497.9 954.8 500.0 C959.7 502.1 956.0 499.5 963.6 503.4 C971.2 507.3 991.6 520.6 1000.3 523.4 C1009.0 526.2 1013.4 520.6 1016.0 520.1 M832.5 383.2 C831.4 384.0 826.8 384.3 826.0 387.9 C825.2 391.5 826.5 399.6 827.9 404.6 C829.3 409.6 833.3 415.5 834.4 417.7 M897.8 410.3 L893.2 427.0 M799.9 226.1 C801.8 226.9 807.7 230.8 811.1 230.8 C814.5 230.8 817.9 225.5 820.4 226.1 C822.9 226.7 823.2 233.2 826.0 234.5 C828.8 235.8 833.2 233.3 837.2 233.6 C841.2 233.9 843.1 235.1 850.3 236.4 C857.4 237.7 872.6 239.5 880.1 241.4 C887.6 243.3 891.4 248.0 895.1 247.6 C898.8 247.2 900.0 241.2 902.5 239.2 C905.0 237.2 900.8 235.1 910.0 235.4 C919.2 235.7 947.5 238.3 958.0 240.9 C968.5 243.5 968.8 246.9 972.7 251.0 C976.6 255.1 977.0 261.7 981.4 265.6 C985.8 269.5 995.9 270.5 998.8 274.4 C1001.7 278.3 995.9 284.5 998.8 288.9 C1001.7 293.2 1013.1 298.6 1016.0 300.5 M202.2 721.0 C203.8 717.6 212.3 705.9 211.7 700.6 C211.1 695.3 200.8 693.1 198.8 689.0 C196.9 684.9 198.5 680.0 200.0 676.2 C201.5 672.4 199.9 670.2 207.8 666.0 C215.7 661.8 235.8 651.7 247.6 651.0 C259.4 650.3 271.6 660.3 278.5 662.0 C285.4 663.7 284.4 663.2 288.7 661.3 C292.9 659.4 294.6 651.9 304.0 650.5 C313.4 649.1 337.1 652.1 345.3 653.0 C353.5 653.9 348.7 651.1 353.0 655.6 C357.3 660.1 364.2 673.8 371.0 680.0 C377.8 686.2 387.6 689.9 394.0 692.9 C400.4 695.9 401.3 695.2 409.5 698.0 C417.7 700.8 437.4 707.7 443.0 709.6" fill="none" stroke="#92c2f6" stroke-width="1.3" stroke-linejoin="round"/>
<path d="M250.7 224.7 C250.4 225.4 248.5 226.9 248.7 228.7 C248.9 230.5 251.4 233.2 252.0 235.3 C252.6 237.4 251.7 240.0 252.0 241.3 C252.3 242.6 251.2 242.7 254.0 243.3 C256.8 243.9 264.5 243.6 268.7 244.7 C272.9 245.8 277.1 248.4 279.3 250.0 C281.5 251.6 279.3 252.6 282.0 254.0 C284.7 255.4 292.5 257.5 295.3 258.7 C298.1 259.9 296.9 261.3 298.7 261.3 C300.5 261.3 304.6 257.8 306.0 258.7 C307.4 259.6 305.8 264.1 307.3 266.7 C308.9 269.2 312.6 272.6 315.3 274.0 C318.0 275.4 320.7 275.4 323.3 275.3 C325.9 275.2 330.2 274.5 330.7 273.3 C331.1 272.1 326.8 269.8 326.0 268.0 C325.2 266.2 324.4 264.4 326.0 262.7 C327.6 261.0 329.1 258.9 335.3 258.0 C341.5 257.1 354.2 257.2 363.3 257.6 C372.4 258.1 384.0 259.5 390.0 260.7 C396.0 261.9 396.9 264.5 399.3 264.7 C401.8 264.9 403.4 261.9 404.7 262.0 C406.0 262.1 404.9 264.1 407.3 265.3 C409.7 266.5 414.4 268.4 419.3 269.3 C424.2 270.2 432.8 271.0 436.8 270.5 C440.8 270.0 441.4 266.4 443.3 266.2 C445.2 266.0 443.5 268.3 448.0 269.2 C452.5 270.1 463.6 269.3 470.4 271.4 C477.2 273.5 486.5 279.2 489.0 281.7 C491.5 284.2 484.4 284.6 485.3 286.3 C486.2 288.0 491.8 289.8 494.6 292.0 C497.4 294.2 500.3 299.2 502.0 299.4 C503.7 299.5 501.8 293.5 504.9 292.9 C508.0 292.3 516.4 296.2 520.7 295.7 C525.1 295.2 528.2 290.0 531.0 290.0 C533.8 290.0 535.2 295.4 537.5 295.7 C539.8 296.0 542.2 291.9 545.0 292.0 C547.8 292.1 551.5 294.4 554.3 296.6 C557.1 298.8 558.7 302.8 561.8 305.0 C564.9 307.2 570.5 307.7 573.0 309.7 C575.5 311.7 573.0 315.4 576.7 317.0 C580.4 318.6 592.0 317.3 595.4 319.0 C598.8 320.7 595.7 325.4 597.2 327.4 C598.8 329.4 602.2 331.7 604.7 331.1 C607.2 330.5 609.7 325.7 612.2 323.7 C614.7 321.7 618.1 318.7 619.6 319.0 C621.1 319.3 622.1 322.1 621.5 325.5 C620.9 328.9 618.2 334.1 616.0 339.3 C613.8 344.5 606.9 352.2 608.0 356.7 C609.1 361.1 621.0 363.0 622.7 366.0 C624.4 369.0 619.1 370.1 618.4 374.8 C617.7 379.5 618.4 391.1 618.4 394.4 M586.6 417.7 C589.1 415.5 596.3 408.5 601.6 404.6 C606.9 400.7 611.2 397.0 618.4 394.4 C625.5 391.8 638.3 388.0 644.5 388.8 C650.7 389.6 652.6 396.5 655.7 399.0 C658.8 401.5 661.9 402.9 663.1 403.7 M668.0 289.3 C666.9 290.5 663.3 294.7 661.3 296.7 C659.3 298.7 655.1 299.4 656.0 301.3 C656.9 303.2 665.4 306.1 666.7 308.0 C668.0 309.9 664.0 310.6 664.0 312.7 C664.0 314.8 665.4 318.7 666.7 320.7 C668.0 322.7 672.9 323.0 672.0 324.7 C671.1 326.4 666.0 330.1 661.3 330.7 C656.6 331.2 648.4 327.7 644.0 328.0 C639.6 328.3 637.2 330.4 634.7 332.7 C632.2 335.0 630.9 338.7 629.3 342.0 C627.7 345.3 626.6 348.7 625.3 352.7 C624.0 356.7 622.0 363.8 621.3 366.0 M644.0 328.0 C643.8 329.7 641.6 335.7 642.7 338.0 C643.8 340.3 646.7 341.2 650.7 342.0 C654.7 342.8 664.0 342.6 666.7 342.7 M638.7 331.3 C638.5 333.1 637.8 337.8 637.3 342.0 C636.8 346.2 637.8 352.7 636.0 356.7 C634.2 360.7 628.2 364.4 626.7 366.0 M717.3 308.7 C715.8 309.1 710.0 309.3 708.0 311.3 C706.0 313.3 705.8 317.1 705.3 320.7 C704.8 324.3 706.4 329.6 705.3 332.7 C704.2 335.8 701.6 337.3 698.7 339.3 C695.8 341.3 690.7 342.0 688.0 344.7 C685.3 347.4 684.5 352.2 682.7 355.3 C680.9 358.4 679.1 360.9 677.3 363.3 C675.5 365.8 672.9 368.9 672.0 370.0 M698.7 339.3 C699.6 340.2 702.5 342.0 704.0 344.7 C705.5 347.4 707.1 352.4 708.0 355.3 C708.9 358.2 709.5 359.6 709.3 362.0 C709.1 364.4 706.3 370.4 706.7 370.0 C707.1 369.6 712.0 358.8 711.6 359.9 C711.2 361.0 705.4 371.6 704.2 376.6 C703.0 381.6 702.3 386.9 704.2 389.7 C706.1 392.5 710.4 390.6 715.4 393.4 C720.4 396.2 731.2 401.5 734.0 406.5 C736.8 411.5 736.6 416.2 732.2 423.3 C727.9 430.4 712.0 445.0 707.9 449.4 M641.4 340.2 C645.1 340.9 658.3 341.3 663.4 344.6 C668.5 347.9 671.5 355.6 672.2 360.0 C672.9 364.4 666.0 368.8 667.8 371.0 C669.6 373.2 680.2 376.1 683.1 373.2 C686.0 370.3 682.7 357.8 685.3 353.4 C687.9 349.0 696.3 347.9 698.5 346.8 M732.8 327.8 C732.5 326.4 731.4 322.4 730.9 319.4 C730.4 316.4 728.8 312.8 730.0 310.0 C731.2 307.2 733.6 303.6 738.4 302.6 C743.2 301.6 752.1 304.2 758.9 303.9 C765.7 303.6 771.3 301.1 779.4 300.7 C787.5 300.3 799.3 299.8 807.4 301.7 C815.5 303.6 820.4 310.2 827.9 311.9 C835.4 313.6 845.7 310.0 852.2 311.9 C858.7 313.8 863.1 320.9 867.1 323.1 C871.1 325.4 874.1 324.1 876.4 325.4 C878.7 326.6 880.2 329.7 881.0 330.6 M697.3 339.0 C700.4 338.4 709.8 337.2 716.0 335.3 C722.2 333.4 728.7 326.1 734.6 327.8 C740.5 329.5 748.8 341.0 751.4 345.5 C754.0 350.0 749.2 354.3 750.5 354.9 C751.8 355.5 757.0 351.5 758.9 349.3 C760.8 347.1 760.2 343.5 761.7 341.8 C763.2 340.1 764.0 340.2 768.2 339.0 C772.4 337.8 780.0 334.3 786.9 334.3 C793.8 334.3 802.8 338.8 809.3 339.0 C815.8 339.2 823.2 337.3 826.0 335.3 C828.8 333.3 825.4 328.9 826.0 326.9 C826.6 324.9 827.9 323.0 829.8 323.1 C831.7 323.2 828.8 326.2 837.2 327.8 C845.6 329.4 868.0 333.1 880.1 332.5 C892.2 331.9 897.5 327.0 910.0 324.1 C922.5 321.2 950.1 317.7 955.2 315.0 C960.3 312.3 946.5 310.0 940.7 307.8 C934.9 305.6 921.5 304.7 920.3 302.0 C919.1 299.3 931.0 296.4 933.4 291.8 C935.8 287.2 939.0 279.0 934.9 274.4 C930.8 269.8 917.2 267.0 908.7 264.2 C900.2 261.4 891.2 261.2 884.0 257.5 C876.8 253.8 869.6 245.5 865.2 242.0 C860.8 238.5 859.0 238.3 857.8 236.4 C856.6 234.5 861.7 232.7 857.8 230.8 C853.9 228.9 838.3 226.1 834.4 225.2 M521.7 317.7 C525.1 318.4 538.5 319.9 542.2 321.8 C545.9 323.7 542.8 326.8 544.0 329.3 C545.2 331.8 548.7 333.5 549.7 336.7 C550.8 339.9 550.5 343.0 550.3 348.7 C550.1 354.4 547.8 364.8 548.4 371.0 C549.0 377.2 551.7 381.3 554.0 386.0 C556.3 390.7 559.1 394.3 562.4 399.0 C565.7 403.7 569.9 410.3 573.6 414.0 C577.3 417.7 581.4 419.8 584.8 421.4 C588.2 422.9 592.5 423.0 594.1 423.3 M562.4 399.0 C559.9 401.2 551.2 408.1 547.5 412.1 C543.8 416.2 540.9 420.8 540.0 423.3 C539.1 425.8 541.3 423.3 541.9 427.0 C542.5 430.7 541.9 439.8 543.7 445.7 C545.6 451.6 551.5 459.7 553.0 462.5 M216.4 331.0 C222.5 332.9 243.3 340.2 253.0 342.3 C262.7 344.4 265.9 340.0 274.8 343.5 C283.7 347.0 298.6 359.7 306.2 363.3 C313.8 366.9 311.4 360.0 320.7 365.2 C330.0 370.4 351.3 389.1 361.8 394.7 C372.3 400.3 376.2 395.8 383.5 398.6 C390.8 401.5 395.4 407.9 405.3 411.8 C415.2 415.7 430.4 417.9 443.0 421.9 C455.6 425.9 470.8 430.3 481.0 435.8 C491.2 441.3 497.5 449.5 504.5 454.9 C511.5 460.3 519.4 464.6 523.1 468.0 C526.8 471.4 526.6 470.7 526.9 475.4 C527.2 480.1 524.4 490.4 525.0 496.0 C525.6 501.6 526.6 504.5 530.6 509.0 C534.6 513.5 543.7 520.2 549.3 523.0 C554.9 525.8 558.9 524.4 564.2 525.8 C569.5 527.2 578.2 530.5 581.0 531.4 M523.1 468.0 C528.4 467.4 545.9 465.4 554.9 464.3 C563.9 463.2 573.5 462.0 577.2 461.5 M553.0 463.3 L560.4 451.2 M553.0 464.3 C557.4 466.8 570.4 475.5 579.1 479.2 C587.8 482.9 600.9 485.4 605.2 486.6 M204.0 570.3 C207.4 571.2 215.5 572.6 224.5 575.5 C233.5 578.4 240.4 583.9 258.0 587.5 C275.6 591.1 309.4 597.0 329.9 597.0 C350.4 597.0 357.2 592.9 381.2 587.5 C405.2 582.1 454.1 573.0 473.7 564.4 C493.3 555.8 492.5 541.0 498.9 536.1 C505.3 531.2 506.0 535.3 511.9 535.1 C517.8 534.9 528.1 536.7 534.3 535.1 C540.5 533.5 546.8 527.3 549.3 525.8 M549.3 525.8 C548.7 530.1 545.5 547.2 545.5 551.9 C545.5 556.6 548.7 553.5 549.3 553.8 M551.1 529.6 L554.9 541.7 M650.0 486.6 C642.5 489.7 617.0 496.9 605.2 505.3 C593.4 513.7 585.3 528.6 579.1 537.0 C572.9 545.4 572.2 549.8 567.9 555.7 C563.5 561.6 556.1 566.3 553.0 572.5 C549.9 578.7 553.0 586.8 549.3 593.0 C545.6 599.2 535.5 601.9 530.6 610.0 C525.7 618.1 528.2 629.4 520.0 641.5 C511.8 653.6 492.6 670.0 481.5 682.6 C470.4 695.2 462.2 707.2 453.2 717.3 C444.2 727.4 438.4 734.6 427.5 743.0 C416.6 751.4 394.3 763.3 387.7 767.4 M650.0 490.4 C641.9 493.8 613.3 501.9 601.5 510.9 C589.7 519.9 584.4 533.9 579.1 544.5 C573.8 555.1 572.9 566.2 569.8 574.3 C566.7 582.4 563.8 587.0 560.4 593.0 C557.0 599.0 552.2 606.3 549.3 610.0 C546.4 613.7 544.0 614.2 543.0 615.0 M553.0 524.0 C554.5 526.5 558.6 534.2 562.3 538.9 C566.0 543.6 573.2 549.8 575.4 552.0 M573.5 583.7 L564.2 604.2 M549.3 593.0 C552.3 594.5 563.0 598.7 567.6 602.3 C572.2 605.9 575.4 610.0 576.9 614.6 C578.4 619.2 577.2 622.3 576.9 630.0 C576.6 637.7 576.3 652.0 575.3 660.7 C574.3 669.4 573.0 676.3 570.7 682.2 C568.4 688.1 562.8 691.6 561.5 696.0 C560.2 700.4 561.6 705.2 563.0 708.3 C564.4 711.4 567.8 714.4 570.0 714.4 C572.2 714.4 575.1 712.4 576.1 708.3 C577.1 704.2 575.2 694.9 576.1 689.8 C577.0 684.7 579.3 680.4 581.5 677.6 C583.7 674.8 585.9 673.4 589.2 673.0 C592.5 672.6 598.3 673.8 601.4 675.3 C604.5 676.8 605.3 679.8 607.6 682.2 C609.9 684.6 609.9 688.3 615.3 689.8 C620.7 691.3 631.6 690.8 640.0 691.4 C648.4 692.0 658.1 692.0 665.5 693.6 C672.9 695.2 681.4 699.9 684.6 701.2 M455.8 717.3 C456.2 721.1 456.4 733.8 458.3 740.4 C460.2 747.0 465.8 754.2 467.3 757.0 M640.0 476.7 C643.1 475.1 649.4 470.1 658.7 467.3 C668.0 464.5 682.0 461.6 696.0 459.9 C710.0 458.2 730.2 457.1 742.6 457.1 C755.0 457.1 756.6 456.6 770.6 459.9 C784.6 463.2 812.6 472.5 826.6 476.7 C840.6 480.9 837.9 480.9 854.6 485.1 C871.3 489.3 903.6 495.3 926.8 501.7 C950.0 508.1 978.7 518.9 993.6 523.4 C1008.5 527.9 1012.3 527.6 1016.0 528.5 M705.3 453.3 C711.5 453.5 736.1 453.2 742.6 454.3 C749.1 455.4 746.7 457.1 744.5 459.9 C742.3 462.7 732.1 467.4 729.6 471.1 C727.1 474.8 727.1 476.1 729.6 482.3 C732.1 488.5 737.0 499.1 744.5 508.4 C752.0 517.7 769.0 532.5 774.4 538.2 C779.8 543.9 776.5 541.9 776.9 542.6 M776.9 542.6 C777.7 543.4 772.6 541.5 781.8 547.6 C791.0 553.7 826.0 573.1 832.2 579.3 C838.4 585.5 827.0 581.8 819.2 584.9 C811.4 588.0 791.9 593.1 785.6 598.0 C779.3 602.9 782.2 611.6 781.5 614.3 M776.9 542.6 C775.9 543.1 773.2 543.0 770.6 545.7 C768.0 548.4 761.9 555.1 761.3 558.8 C760.7 562.5 763.5 565.0 766.9 568.1 C770.3 571.2 779.3 575.9 781.8 577.4 M666.1 523.3 C668.0 524.5 672.9 529.2 677.3 530.8 C681.7 532.4 687.9 530.5 692.3 532.7 C696.7 534.9 701.6 541.9 703.5 543.8 M880.8 439.3 C880.2 440.9 880.4 443.1 877.0 448.7 C873.6 454.3 863.9 466.7 860.2 472.9 C856.5 479.1 852.4 479.8 854.6 486.0 C856.8 492.2 865.2 505.4 873.3 510.3 C881.4 515.1 898.4 514.3 903.4 515.1 M854.6 485.1 L900.0 497.2 M770.0 337.5 C773.1 337.0 782.5 334.4 788.7 334.7 C794.9 335.0 801.1 339.1 807.3 339.3 C813.5 339.5 822.9 337.2 826.0 335.6 C829.1 334.1 826.0 330.9 826.0 330.0 M709.8 385.0 C715.7 384.4 735.6 382.7 745.2 381.3 C754.8 379.9 761.0 375.2 767.6 376.6 C774.2 378.0 780.1 384.4 784.9 389.7 C789.6 395.0 794.2 402.2 796.1 408.4 C798.0 414.6 798.0 417.7 796.1 427.0 C794.2 436.3 786.8 458.2 784.9 464.4 M745.2 381.3 L745.3 396.0 M796.1 427.0 C798.6 424.2 808.3 414.2 811.1 410.3 C813.9 406.4 810.1 404.3 812.9 403.7 C815.7 403.1 825.4 406.0 827.9 406.5 M809.2 412.1 C811.4 412.7 818.6 413.6 822.3 415.8 C826.0 418.0 830.0 421.5 831.6 425.2 C833.2 428.9 829.7 433.5 831.6 438.2 C833.5 442.9 842.5 446.7 842.8 453.2 C843.1 459.7 835.0 473.4 833.5 477.4 M882.0 397.2 C881.7 402.5 879.8 422.7 880.1 428.9 C880.4 435.1 884.1 431.1 883.8 434.5 C883.5 437.9 881.3 444.4 878.2 449.4 C875.1 454.4 868.3 458.5 865.2 464.4 C862.1 470.3 860.5 481.5 859.6 484.9 M878.2 453.2 L888.5 463.4 M894.1 428.0 C894.9 431.6 896.1 444.6 898.8 449.4 C901.4 454.2 903.5 452.5 910.0 456.9 C916.5 461.3 927.1 469.4 938.0 475.6 C948.9 481.8 966.0 488.4 975.3 494.2 C984.6 499.9 988.3 504.1 993.6 510.1 C998.9 516.1 1003.3 525.1 1007.0 530.1 C1010.7 535.1 1014.5 538.5 1016.0 540.2 M930.5 404.6 C929.9 402.8 924.3 397.1 926.8 393.5 C929.3 389.9 939.2 384.4 945.4 383.2 C951.6 381.9 958.2 386.0 964.1 386.0 C970.0 386.0 972.2 380.7 980.9 383.2 C989.5 385.7 1010.1 397.9 1016.0 400.9 M980.9 383.2 L980.9 372.9 M1001.4 401.9 L1016.0 408.4 M999.6 410.3 C1000.8 411.9 1004.8 415.0 1007.0 419.6 C1009.2 424.2 1011.1 434.5 1012.6 438.2 C1014.1 441.9 1015.4 441.4 1016.0 442.0 M998.6 438.2 C998.1 446.6 997.2 478.3 995.8 488.6 C994.4 498.9 992.8 494.8 990.2 500.0 C987.6 505.2 981.7 516.7 980.0 520.0 M998.6 445.7 L1016.0 447.6 M998.6 451.3 L1016.0 454.1 M1012.6 464.4 L999.6 488.6 M880.0 764.0 C885.6 762.6 904.5 756.7 913.4 755.6 C922.3 754.5 925.7 762.0 933.5 757.3 C941.3 752.6 949.1 743.9 960.2 727.2 C971.3 710.5 991.0 673.8 1000.3 657.1 C1009.6 640.4 1013.4 632.0 1016.0 627.0 M920.1 568.5 C923.5 569.1 932.4 572.7 940.2 571.9 C948.0 571.1 959.1 567.4 966.9 563.5 C974.7 559.6 981.9 553.5 986.9 548.5 C991.9 543.5 994.8 541.0 997.0 533.5 C999.2 526.0 999.8 508.4 1000.3 503.4 M1013.7 570.2 L1016.0 563.5 M694.1 695.5 C700.8 687.5 726.2 658.2 734.2 647.7 C742.2 637.2 740.9 637.0 741.9 632.5 C742.9 628.0 740.3 622.9 740.0 621.0 M724.7 624.8 C727.6 623.8 734.9 622.0 741.9 619.1 C748.9 616.2 760.1 608.4 766.7 607.6 C773.3 606.8 779.0 613.2 781.5 614.3 M709.4 622.9 C710.4 624.8 711.1 630.7 715.2 634.4 C719.3 638.1 731.0 643.1 734.2 644.9 M804.9 607.6 C802.7 610.5 791.8 619.1 791.5 624.8 C791.2 630.5 799.5 637.1 803.0 642.0 C806.5 646.9 807.9 647.9 812.5 653.9 C817.1 659.9 828.3 672.1 830.8 678.2 C833.3 684.3 830.8 683.8 827.7 690.4 C824.7 697.0 814.0 709.6 812.5 717.7 C811.0 725.8 822.1 732.9 818.6 739.0 C815.1 745.1 795.8 751.8 791.2 754.3 M684.6 735.6 C687.1 736.2 690.2 740.3 699.9 739.4 C709.5 738.5 733.9 732.6 742.5 730.0 C751.1 727.4 743.6 719.5 751.7 723.8 C759.8 728.1 784.6 750.5 791.2 755.8 M576.9 630.0 C577.9 630.0 581.2 628.2 583.0 630.0 C584.8 631.8 585.8 637.9 587.6 640.7 C589.4 643.5 589.9 646.0 593.8 646.8 C597.6 647.6 607.4 644.0 610.7 645.3 C614.0 646.6 615.0 650.9 613.7 654.5 C612.4 658.1 603.8 663.7 603.0 666.8 C602.2 669.9 608.1 670.2 609.1 673.0 C610.1 675.8 608.1 680.9 609.1 683.7 C610.1 686.5 614.3 688.8 615.3 689.8 M669.3 693.6 C671.5 692.0 679.2 685.0 682.7 684.0 C686.2 683.0 688.4 686.0 690.3 687.9 C692.2 689.8 694.1 693.0 694.1 695.5 C694.1 698.0 691.9 699.9 690.3 703.1 C688.7 706.3 689.0 709.2 684.6 714.6 C680.2 720.0 664.9 732.1 663.6 735.6 C662.3 739.1 674.1 737.5 677.0 735.6 C679.9 733.7 678.9 727.3 680.8 724.1 C682.7 720.9 685.5 715.5 688.4 716.5 C691.3 717.5 696.4 726.1 698.0 729.9 C699.6 733.7 698.0 737.8 698.0 739.4" fill="none" stroke="#fbe88c" stroke-width="3.3" stroke-linejoin="round" stroke-linecap="round"/>
<path d="M250.7 224.7 C250.4 225.4 248.5 226.9 248.7 228.7 C248.9 230.5 251.4 233.2 252.0 235.3 C252.6 237.4 251.7 240.0 252.0 241.3 C252.3 242.6 251.2 242.7 254.0 243.3 C256.8 243.9 264.5 243.6 268.7 244.7 C272.9 245.8 277.1 248.4 279.3 250.0 C281.5 251.6 279.3 252.6 282.0 254.0 C284.7 255.4 292.5 257.5 295.3 258.7 C298.1 259.9 296.9 261.3 298.7 261.3 C300.5 261.3 304.6 257.8 306.0 258.7 C307.4 259.6 305.8 264.1 307.3 266.7 C308.9 269.2 312.6 272.6 315.3 274.0 C318.0 275.4 320.7 275.4 323.3 275.3 C325.9 275.2 330.2 274.5 330.7 273.3 C331.1 272.1 326.8 269.8 326.0 268.0 C325.2 266.2 324.4 264.4 326.0 262.7 C327.6 261.0 329.1 258.9 335.3 258.0 C341.5 257.1 354.2 257.2 363.3 257.6 C372.4 258.1 384.0 259.5 390.0 260.7 C396.0 261.9 396.9 264.5 399.3 264.7 C401.8 264.9 403.4 261.9 404.7 262.0 C406.0 262.1 404.9 264.1 407.3 265.3 C409.7 266.5 414.4 268.4 419.3 269.3 C424.2 270.2 432.8 271.0 436.8 270.5 C440.8 270.0 441.4 266.4 443.3 266.2 C445.2 266.0 443.5 268.3 448.0 269.2 C452.5 270.1 463.6 269.3 470.4 271.4 C477.2 273.5 486.5 279.2 489.0 281.7 C491.5 284.2 484.4 284.6 485.3 286.3 C486.2 288.0 491.8 289.8 494.6 292.0 C497.4 294.2 500.3 299.2 502.0 299.4 C503.7 299.5 501.8 293.5 504.9 292.9 C508.0 292.3 516.4 296.2 520.7 295.7 C525.1 295.2 528.2 290.0 531.0 290.0 C533.8 290.0 535.2 295.4 537.5 295.7 C539.8 296.0 542.2 291.9 545.0 292.0 C547.8 292.1 551.5 294.4 554.3 296.6 C557.1 298.8 558.7 302.8 561.8 305.0 C564.9 307.2 570.5 307.7 573.0 309.7 C575.5 311.7 573.0 315.4 576.7 317.0 C580.4 318.6 592.0 317.3 595.4 319.0 C598.8 320.7 595.7 325.4 597.2 327.4 C598.8 329.4 602.2 331.7 604.7 331.1 C607.2 330.5 609.7 325.7 612.2 323.7 C614.7 321.7 618.1 318.7 619.6 319.0 C621.1 319.3 622.1 322.1 621.5 325.5 C620.9 328.9 618.2 334.1 616.0 339.3 C613.8 344.5 606.9 352.2 608.0 356.7 C609.1 361.1 621.0 363.0 622.7 366.0 C624.4 369.0 619.1 370.1 618.4 374.8 C617.7 379.5 618.4 391.1 618.4 394.4 M586.6 417.7 C589.1 415.5 596.3 408.5 601.6 404.6 C606.9 400.7 611.2 397.0 618.4 394.4 C625.5 391.8 638.3 388.0 644.5 388.8 C650.7 389.6 652.6 396.5 655.7 399.0 C658.8 401.5 661.9 402.9 663.1 403.7 M668.0 289.3 C666.9 290.5 663.3 294.7 661.3 296.7 C659.3 298.7 655.1 299.4 656.0 301.3 C656.9 303.2 665.4 306.1 666.7 308.0 C668.0 309.9 664.0 310.6 664.0 312.7 C664.0 314.8 665.4 318.7 666.7 320.7 C668.0 322.7 672.9 323.0 672.0 324.7 C671.1 326.4 666.0 330.1 661.3 330.7 C656.6 331.2 648.4 327.7 644.0 328.0 C639.6 328.3 637.2 330.4 634.7 332.7 C632.2 335.0 630.9 338.7 629.3 342.0 C627.7 345.3 626.6 348.7 625.3 352.7 C624.0 356.7 622.0 363.8 621.3 366.0 M644.0 328.0 C643.8 329.7 641.6 335.7 642.7 338.0 C643.8 340.3 646.7 341.2 650.7 342.0 C654.7 342.8 664.0 342.6 666.7 342.7 M638.7 331.3 C638.5 333.1 637.8 337.8 637.3 342.0 C636.8 346.2 637.8 352.7 636.0 356.7 C634.2 360.7 628.2 364.4 626.7 366.0 M717.3 308.7 C715.8 309.1 710.0 309.3 708.0 311.3 C706.0 313.3 705.8 317.1 705.3 320.7 C704.8 324.3 706.4 329.6 705.3 332.7 C704.2 335.8 701.6 337.3 698.7 339.3 C695.8 341.3 690.7 342.0 688.0 344.7 C685.3 347.4 684.5 352.2 682.7 355.3 C680.9 358.4 679.1 360.9 677.3 363.3 C675.5 365.8 672.9 368.9 672.0 370.0 M698.7 339.3 C699.6 340.2 702.5 342.0 704.0 344.7 C705.5 347.4 707.1 352.4 708.0 355.3 C708.9 358.2 709.5 359.6 709.3 362.0 C709.1 364.4 706.3 370.4 706.7 370.0 C707.1 369.6 712.0 358.8 711.6 359.9 C711.2 361.0 705.4 371.6 704.2 376.6 C703.0 381.6 702.3 386.9 704.2 389.7 C706.1 392.5 710.4 390.6 715.4 393.4 C720.4 396.2 731.2 401.5 734.0 406.5 C736.8 411.5 736.6 416.2 732.2 423.3 C727.9 430.4 712.0 445.0 707.9 449.4 M641.4 340.2 C645.1 340.9 658.3 341.3 663.4 344.6 C668.5 347.9 671.5 355.6 672.2 360.0 C672.9 364.4 666.0 368.8 667.8 371.0 C669.6 373.2 680.2 376.1 683.1 373.2 C686.0 370.3 682.7 357.8 685.3 353.4 C687.9 349.0 696.3 347.9 698.5 346.8 M732.8 327.8 C732.5 326.4 731.4 322.4 730.9 319.4 C730.4 316.4 728.8 312.8 730.0 310.0 C731.2 307.2 733.6 303.6 738.4 302.6 C743.2 301.6 752.1 304.2 758.9 303.9 C765.7 303.6 771.3 301.1 779.4 300.7 C787.5 300.3 799.3 299.8 807.4 301.7 C815.5 303.6 820.4 310.2 827.9 311.9 C835.4 313.6 845.7 310.0 852.2 311.9 C858.7 313.8 863.1 320.9 867.1 323.1 C871.1 325.4 874.1 324.1 876.4 325.4 C878.7 326.6 880.2 329.7 881.0 330.6 M697.3 339.0 C700.4 338.4 709.8 337.2 716.0 335.3 C722.2 333.4 728.7 326.1 734.6 327.8 C740.5 329.5 748.8 341.0 751.4 345.5 C754.0 350.0 749.2 354.3 750.5 354.9 C751.8 355.5 757.0 351.5 758.9 349.3 C760.8 347.1 760.2 343.5 761.7 341.8 C763.2 340.1 764.0 340.2 768.2 339.0 C772.4 337.8 780.0 334.3 786.9 334.3 C793.8 334.3 802.8 338.8 809.3 339.0 C815.8 339.2 823.2 337.3 826.0 335.3 C828.8 333.3 825.4 328.9 826.0 326.9 C826.6 324.9 827.9 323.0 829.8 323.1 C831.7 323.2 828.8 326.2 837.2 327.8 C845.6 329.4 868.0 333.1 880.1 332.5 C892.2 331.9 897.5 327.0 910.0 324.1 C922.5 321.2 950.1 317.7 955.2 315.0 C960.3 312.3 946.5 310.0 940.7 307.8 C934.9 305.6 921.5 304.7 920.3 302.0 C919.1 299.3 931.0 296.4 933.4 291.8 C935.8 287.2 939.0 279.0 934.9 274.4 C930.8 269.8 917.2 267.0 908.7 264.2 C900.2 261.4 891.2 261.2 884.0 257.5 C876.8 253.8 869.6 245.5 865.2 242.0 C860.8 238.5 859.0 238.3 857.8 236.4 C856.6 234.5 861.7 232.7 857.8 230.8 C853.9 228.9 838.3 226.1 834.4 225.2 M521.7 317.7 C525.1 318.4 538.5 319.9 542.2 321.8 C545.9 323.7 542.8 326.8 544.0 329.3 C545.2 331.8 548.7 333.5 549.7 336.7 C550.8 339.9 550.5 343.0 550.3 348.7 C550.1 354.4 547.8 364.8 548.4 371.0 C549.0 377.2 551.7 381.3 554.0 386.0 C556.3 390.7 559.1 394.3 562.4 399.0 C565.7 403.7 569.9 410.3 573.6 414.0 C577.3 417.7 581.4 419.8 584.8 421.4 C588.2 422.9 592.5 423.0 594.1 423.3 M562.4 399.0 C559.9 401.2 551.2 408.1 547.5 412.1 C543.8 416.2 540.9 420.8 540.0 423.3 C539.1 425.8 541.3 423.3 541.9 427.0 C542.5 430.7 541.9 439.8 543.7 445.7 C545.6 451.6 551.5 459.7 553.0 462.5 M216.4 331.0 C222.5 332.9 243.3 340.2 253.0 342.3 C262.7 344.4 265.9 340.0 274.8 343.5 C283.7 347.0 298.6 359.7 306.2 363.3 C313.8 366.9 311.4 360.0 320.7 365.2 C330.0 370.4 351.3 389.1 361.8 394.7 C372.3 400.3 376.2 395.8 383.5 398.6 C390.8 401.5 395.4 407.9 405.3 411.8 C415.2 415.7 430.4 417.9 443.0 421.9 C455.6 425.9 470.8 430.3 481.0 435.8 C491.2 441.3 497.5 449.5 504.5 454.9 C511.5 460.3 519.4 464.6 523.1 468.0 C526.8 471.4 526.6 470.7 526.9 475.4 C527.2 480.1 524.4 490.4 525.0 496.0 C525.6 501.6 526.6 504.5 530.6 509.0 C534.6 513.5 543.7 520.2 549.3 523.0 C554.9 525.8 558.9 524.4 564.2 525.8 C569.5 527.2 578.2 530.5 581.0 531.4 M523.1 468.0 C528.4 467.4 545.9 465.4 554.9 464.3 C563.9 463.2 573.5 462.0 577.2 461.5 M553.0 463.3 L560.4 451.2 M553.0 464.3 C557.4 466.8 570.4 475.5 579.1 479.2 C587.8 482.9 600.9 485.4 605.2 486.6 M204.0 570.3 C207.4 571.2 215.5 572.6 224.5 575.5 C233.5 578.4 240.4 583.9 258.0 587.5 C275.6 591.1 309.4 597.0 329.9 597.0 C350.4 597.0 357.2 592.9 381.2 587.5 C405.2 582.1 454.1 573.0 473.7 564.4 C493.3 555.8 492.5 541.0 498.9 536.1 C505.3 531.2 506.0 535.3 511.9 535.1 C517.8 534.9 528.1 536.7 534.3 535.1 C540.5 533.5 546.8 527.3 549.3 525.8 M549.3 525.8 C548.7 530.1 545.5 547.2 545.5 551.9 C545.5 556.6 548.7 553.5 549.3 553.8 M551.1 529.6 L554.9 541.7 M650.0 486.6 C642.5 489.7 617.0 496.9 605.2 505.3 C593.4 513.7 585.3 528.6 579.1 537.0 C572.9 545.4 572.2 549.8 567.9 555.7 C563.5 561.6 556.1 566.3 553.0 572.5 C549.9 578.7 553.0 586.8 549.3 593.0 C545.6 599.2 535.5 601.9 530.6 610.0 C525.7 618.1 528.2 629.4 520.0 641.5 C511.8 653.6 492.6 670.0 481.5 682.6 C470.4 695.2 462.2 707.2 453.2 717.3 C444.2 727.4 438.4 734.6 427.5 743.0 C416.6 751.4 394.3 763.3 387.7 767.4 M650.0 490.4 C641.9 493.8 613.3 501.9 601.5 510.9 C589.7 519.9 584.4 533.9 579.1 544.5 C573.8 555.1 572.9 566.2 569.8 574.3 C566.7 582.4 563.8 587.0 560.4 593.0 C557.0 599.0 552.2 606.3 549.3 610.0 C546.4 613.7 544.0 614.2 543.0 615.0 M553.0 524.0 C554.5 526.5 558.6 534.2 562.3 538.9 C566.0 543.6 573.2 549.8 575.4 552.0 M573.5 583.7 L564.2 604.2 M549.3 593.0 C552.3 594.5 563.0 598.7 567.6 602.3 C572.2 605.9 575.4 610.0 576.9 614.6 C578.4 619.2 577.2 622.3 576.9 630.0 C576.6 637.7 576.3 652.0 575.3 660.7 C574.3 669.4 573.0 676.3 570.7 682.2 C568.4 688.1 562.8 691.6 561.5 696.0 C560.2 700.4 561.6 705.2 563.0 708.3 C564.4 711.4 567.8 714.4 570.0 714.4 C572.2 714.4 575.1 712.4 576.1 708.3 C577.1 704.2 575.2 694.9 576.1 689.8 C577.0 684.7 579.3 680.4 581.5 677.6 C583.7 674.8 585.9 673.4 589.2 673.0 C592.5 672.6 598.3 673.8 601.4 675.3 C604.5 676.8 605.3 679.8 607.6 682.2 C609.9 684.6 609.9 688.3 615.3 689.8 C620.7 691.3 631.6 690.8 640.0 691.4 C648.4 692.0 658.1 692.0 665.5 693.6 C672.9 695.2 681.4 699.9 684.6 701.2 M455.8 717.3 C456.2 721.1 456.4 733.8 458.3 740.4 C460.2 747.0 465.8 754.2 467.3 757.0 M640.0 476.7 C643.1 475.1 649.4 470.1 658.7 467.3 C668.0 464.5 682.0 461.6 696.0 459.9 C710.0 458.2 730.2 457.1 742.6 457.1 C755.0 457.1 756.6 456.6 770.6 459.9 C784.6 463.2 812.6 472.5 826.6 476.7 C840.6 480.9 837.9 480.9 854.6 485.1 C871.3 489.3 903.6 495.3 926.8 501.7 C950.0 508.1 978.7 518.9 993.6 523.4 C1008.5 527.9 1012.3 527.6 1016.0 528.5 M705.3 453.3 C711.5 453.5 736.1 453.2 742.6 454.3 C749.1 455.4 746.7 457.1 744.5 459.9 C742.3 462.7 732.1 467.4 729.6 471.1 C727.1 474.8 727.1 476.1 729.6 482.3 C732.1 488.5 737.0 499.1 744.5 508.4 C752.0 517.7 769.0 532.5 774.4 538.2 C779.8 543.9 776.5 541.9 776.9 542.6 M776.9 542.6 C777.7 543.4 772.6 541.5 781.8 547.6 C791.0 553.7 826.0 573.1 832.2 579.3 C838.4 585.5 827.0 581.8 819.2 584.9 C811.4 588.0 791.9 593.1 785.6 598.0 C779.3 602.9 782.2 611.6 781.5 614.3 M776.9 542.6 C775.9 543.1 773.2 543.0 770.6 545.7 C768.0 548.4 761.9 555.1 761.3 558.8 C760.7 562.5 763.5 565.0 766.9 568.1 C770.3 571.2 779.3 575.9 781.8 577.4 M666.1 523.3 C668.0 524.5 672.9 529.2 677.3 530.8 C681.7 532.4 687.9 530.5 692.3 532.7 C696.7 534.9 701.6 541.9 703.5 543.8 M880.8 439.3 C880.2 440.9 880.4 443.1 877.0 448.7 C873.6 454.3 863.9 466.7 860.2 472.9 C856.5 479.1 852.4 479.8 854.6 486.0 C856.8 492.2 865.2 505.4 873.3 510.3 C881.4 515.1 898.4 514.3 903.4 515.1 M854.6 485.1 L900.0 497.2 M770.0 337.5 C773.1 337.0 782.5 334.4 788.7 334.7 C794.9 335.0 801.1 339.1 807.3 339.3 C813.5 339.5 822.9 337.2 826.0 335.6 C829.1 334.1 826.0 330.9 826.0 330.0 M709.8 385.0 C715.7 384.4 735.6 382.7 745.2 381.3 C754.8 379.9 761.0 375.2 767.6 376.6 C774.2 378.0 780.1 384.4 784.9 389.7 C789.6 395.0 794.2 402.2 796.1 408.4 C798.0 414.6 798.0 417.7 796.1 427.0 C794.2 436.3 786.8 458.2 784.9 464.4 M745.2 381.3 L745.3 396.0 M796.1 427.0 C798.6 424.2 808.3 414.2 811.1 410.3 C813.9 406.4 810.1 404.3 812.9 403.7 C815.7 403.1 825.4 406.0 827.9 406.5 M809.2 412.1 C811.4 412.7 818.6 413.6 822.3 415.8 C826.0 418.0 830.0 421.5 831.6 425.2 C833.2 428.9 829.7 433.5 831.6 438.2 C833.5 442.9 842.5 446.7 842.8 453.2 C843.1 459.7 835.0 473.4 833.5 477.4 M882.0 397.2 C881.7 402.5 879.8 422.7 880.1 428.9 C880.4 435.1 884.1 431.1 883.8 434.5 C883.5 437.9 881.3 444.4 878.2 449.4 C875.1 454.4 868.3 458.5 865.2 464.4 C862.1 470.3 860.5 481.5 859.6 484.9 M878.2 453.2 L888.5 463.4 M894.1 428.0 C894.9 431.6 896.1 444.6 898.8 449.4 C901.4 454.2 903.5 452.5 910.0 456.9 C916.5 461.3 927.1 469.4 938.0 475.6 C948.9 481.8 966.0 488.4 975.3 494.2 C984.6 499.9 988.3 504.1 993.6 510.1 C998.9 516.1 1003.3 525.1 1007.0 530.1 C1010.7 535.1 1014.5 538.5 1016.0 540.2 M930.5 404.6 C929.9 402.8 924.3 397.1 926.8 393.5 C929.3 389.9 939.2 384.4 945.4 383.2 C951.6 381.9 958.2 386.0 964.1 386.0 C970.0 386.0 972.2 380.7 980.9 383.2 C989.5 385.7 1010.1 397.9 1016.0 400.9 M980.9 383.2 L980.9 372.9 M1001.4 401.9 L1016.0 408.4 M999.6 410.3 C1000.8 411.9 1004.8 415.0 1007.0 419.6 C1009.2 424.2 1011.1 434.5 1012.6 438.2 C1014.1 441.9 1015.4 441.4 1016.0 442.0 M998.6 438.2 C998.1 446.6 997.2 478.3 995.8 488.6 C994.4 498.9 992.8 494.8 990.2 500.0 C987.6 505.2 981.7 516.7 980.0 520.0 M998.6 445.7 L1016.0 447.6 M998.6 451.3 L1016.0 454.1 M1012.6 464.4 L999.6 488.6 M880.0 764.0 C885.6 762.6 904.5 756.7 913.4 755.6 C922.3 754.5 925.7 762.0 933.5 757.3 C941.3 752.6 949.1 743.9 960.2 727.2 C971.3 710.5 991.0 673.8 1000.3 657.1 C1009.6 640.4 1013.4 632.0 1016.0 627.0 M920.1 568.5 C923.5 569.1 932.4 572.7 940.2 571.9 C948.0 571.1 959.1 567.4 966.9 563.5 C974.7 559.6 981.9 553.5 986.9 548.5 C991.9 543.5 994.8 541.0 997.0 533.5 C999.2 526.0 999.8 508.4 1000.3 503.4 M1013.7 570.2 L1016.0 563.5 M694.1 695.5 C700.8 687.5 726.2 658.2 734.2 647.7 C742.2 637.2 740.9 637.0 741.9 632.5 C742.9 628.0 740.3 622.9 740.0 621.0 M724.7 624.8 C727.6 623.8 734.9 622.0 741.9 619.1 C748.9 616.2 760.1 608.4 766.7 607.6 C773.3 606.8 779.0 613.2 781.5 614.3 M709.4 622.9 C710.4 624.8 711.1 630.7 715.2 634.4 C719.3 638.1 731.0 643.1 734.2 644.9 M804.9 607.6 C802.7 610.5 791.8 619.1 791.5 624.8 C791.2 630.5 799.5 637.1 803.0 642.0 C806.5 646.9 807.9 647.9 812.5 653.9 C817.1 659.9 828.3 672.1 830.8 678.2 C833.3 684.3 830.8 683.8 827.7 690.4 C824.7 697.0 814.0 709.6 812.5 717.7 C811.0 725.8 822.1 732.9 818.6 739.0 C815.1 745.1 795.8 751.8 791.2 754.3 M684.6 735.6 C687.1 736.2 690.2 740.3 699.9 739.4 C709.5 738.5 733.9 732.6 742.5 730.0 C751.1 727.4 743.6 719.5 751.7 723.8 C759.8 728.1 784.6 750.5 791.2 755.8 M576.9 630.0 C577.9 630.0 581.2 628.2 583.0 630.0 C584.8 631.8 585.8 637.9 587.6 640.7 C589.4 643.5 589.9 646.0 593.8 646.8 C597.6 647.6 607.4 644.0 610.7 645.3 C614.0 646.6 615.0 650.9 613.7 654.5 C612.4 658.1 603.8 663.7 603.0 666.8 C602.2 669.9 608.1 670.2 609.1 673.0 C610.1 675.8 608.1 680.9 609.1 683.7 C610.1 686.5 614.3 688.8 615.3 689.8 M669.3 693.6 C671.5 692.0 679.2 685.0 682.7 684.0 C686.2 683.0 688.4 686.0 690.3 687.9 C692.2 689.8 694.1 693.0 694.1 695.5 C694.1 698.0 691.9 699.9 690.3 703.1 C688.7 706.3 689.0 709.2 684.6 714.6 C680.2 720.0 664.9 732.1 663.6 735.6 C662.3 739.1 674.1 737.5 677.0 735.6 C679.9 733.7 678.9 727.3 680.8 724.1 C682.7 720.9 685.5 715.5 688.4 716.5 C691.3 717.5 696.4 726.1 698.0 729.9 C699.6 733.7 698.0 737.8 698.0 739.4" fill="none" stroke="#b6b6b8" stroke-width="2" stroke-dasharray="1.8 1.25"/>
<path d="M846 361c2 1 5 6 5 10-1 2-3 1-4 0-1-3-2-7-1-10z" fill="url(#waterp)" stroke="#1c2c70" stroke-width="0.8"/>
<path d="M979 399c6 1 14 4 19 8-2 2-5 4-8 4-5 0-8-3-11-12z" fill="url(#waterp)" stroke="#1c2c70" stroke-width="0.8"/>
<path d="M775.6 442c2 2 4 6 3.7 10-2 0-4-1-4.5-3z" fill="url(#waterp)" stroke="#1c2c70" stroke-width="0.8"/>
<path d="M865 460.6c4-3 9-5 13-6.5 0 3-1 5-4 6z" fill="url(#waterp)" stroke="#1c2c70" stroke-width="0.8"/>
<path d="M938 438c2-2 4-2 5 0l0 1z" fill="url(#waterp)" stroke="#1c2c70" stroke-width="0.8"/>
<path d="M940.8 446.6c3 2 5 5 5.6 8.4-2 1-4 0-5.6-1z" fill="url(#waterp)" stroke="#1c2c70" stroke-width="0.8"/>
<path d="M943.6 466.2c3 3 6 7 6.5 12-3 1-5 0-6.5-3z" fill="url(#waterp)" stroke="#1c2c70" stroke-width="0.8"/>
<path d="M769 383c2 0 4 1 5 3-2 1-4 0-5-3z" fill="url(#waterp)" stroke="#1c2c70" stroke-width="0.8"/>
<path d="M765.8 375.3a1.5 1.5 0 1 0 3 0a1.5 1.5 0 1 0-3 0z" fill="url(#waterp)" stroke="#1c2c70" stroke-width="0.8"/>
<path d="M714 396c1-2 3-2 3 0-1 2-2 2-3 0z" fill="url(#waterp)" stroke="#1c2c70" stroke-width="0.8"/>
<path d="M996 550c1 0 3 1 3 3-2 0-3-1-3-3z" fill="url(#waterp)" stroke="#1c2c70" stroke-width="0.8"/>
<path d="M988 503c4 0 8 1 10 3-3 1-7 0-10-3z" fill="url(#waterp)" stroke="#1c2c70" stroke-width="0.8"/>
<ellipse cx="964.7" cy="374.8" rx="3.6" ry="2.6" fill="url(#waterp)" stroke="#1c2c70" stroke-width="0.8"/>
<rect x="176.5" y="168.5" width="10" height="10" fill="#e6e6ec" stroke="#5e7d92" stroke-width="1"/>
<circle cx="629.6" cy="445.5" r="5.6000000000000005" fill="#fff"/>
<circle cx="629.6" cy="445.5" r="4.4" fill="#4c8a4c"/>
<circle cx="644.7" cy="502.5" r="5.6000000000000005" fill="#fff"/>
<circle cx="644.7" cy="502.5" r="4.4" fill="#4c8a4c"/>
<circle cx="776.9" cy="542.6" r="3.8" fill="#4c8a4c"/>
<circle cx="781.5" cy="614.3" r="5.2" fill="#fff"/>
<circle cx="781.5" cy="614.3" r="4" fill="#4c8a4c"/>
<circle cx="693.2" cy="711.3" r="5.2" fill="#fff"/>
<circle cx="693.2" cy="711.3" r="4" fill="#4c8a4c"/>
<text x="635" y="439.3" font-size="18.3" font-style="italic" fill="#fff" stroke="#646464" stroke-width="3" paint-order="stroke" stroke-linejoin="round" font-family="Liberation Sans">Swellendam</text>
<text x="648.5" y="496.6" font-size="15.8" fill="#fff" stroke="#646464" stroke-width="3" paint-order="stroke" stroke-linejoin="round" font-family="Liberation Sans">Railton</text>
<text x="781" y="537.2" font-size="12.9" fill="#fff" stroke="#646464" stroke-width="3" paint-order="stroke" stroke-linejoin="round" font-family="Liberation Sans">Bontebok National Park Entrance Gate</text>
<text x="786" y="608.9" font-size="12.9" fill="#fff" stroke="#646464" stroke-width="3" paint-order="stroke" stroke-linejoin="round" font-family="Liberation Sans">Bontebok National Park Reception &amp; Shop</text>
<text x="697.5" y="707" font-size="11" fill="#fff" stroke="#646464" stroke-width="3" paint-order="stroke" stroke-linejoin="round" font-family="Liberation Sans">Lang Elsies Kraal Rest Camp</text>
</svg></div>
<!-- scrollbars -->
<div class="a" style="left:1016px;top:114px;width:15px;height:660px;background:linear-gradient(90deg,#f0f0f0,#fafafa 40%,#f6f6f6);border-left:1px solid #e6e6e6"></div>
<div class="a" style="left:1020px;top:118px;width:8px;height:626px;border-radius:4px;background:#bdbdbd"></div>
<div class="a" style="left:84px;top:774px;width:932px;height:15px;background:linear-gradient(#f0f0f0,#fafafa 40%,#f6f6f6);border-top:1px solid #e0e0e0"></div>
<div class="a" style="left:90px;top:778px;width:857px;height:8px;border-radius:4px;background:#bdbdbd"></div>
<div class="a" style="left:1016px;top:774px;width:15px;height:15px;background:#fff;border-left:1px solid #e0e0e0;border-top:1px solid #e0e0e0"></div>

<!-- bottom buttons -->
<div class="btn" style="left:63px;top:804px;width:57px;height:21px;line-height:16px">Help</div>
<div class="btn" style="left:968px;top:804px;width:63px;height:21px;line-height:16px">Close</div>

<!-- splitter -->
<div class="a" style="left:1038px;top:93px;width:1px;height:739px;background:#8e8e8e"></div>

<!-- right panel -->
<div class="dockhdr" style="top:93px;height:26px;line-height:24px"><div class="xbtn" style="top:5px"></div>Command history</div>
<div class="a" style="left:1039px;top:119px;width:403px;height:138px;background:#fff;border-bottom:1px solid #a0a0a0"></div>
<div class="lbl" style="left:1045px;top:119px">&lt;empty&gt;</div>
<div class="lbl" style="left:1045px;top:134px">Map added</div>
<div class="a" style="left:1040px;top:150px;width:401px;height:15px;background:#3875d7"></div>
<div class="lbl" style="left:1045px;top:148.5px;color:#fff">Change item position</div>

<!-- tabs -->
<div class="a" style="left:1039px;top:268px;width:403px;height:12px;border:1px solid #b4b4b4;border-bottom:none;border-radius:5px 5px 0 0;background:linear-gradient(#e8e8e8,#dedede)"></div>
<div class="btn" style="left:1079px;top:258px;width:94px;height:21px;border-radius:4px 0 0 4px;font-size:13px;line-height:17px">Composition</div>
<div class="a" style="left:1172px;top:258px;width:115px;height:21px;background:linear-gradient(#a2a2a2,#8a8a8a);border:1px solid #6e6e6e;color:#fff;text-align:center;line-height:17px">Item Properties</div>
<div class="btn" style="left:1286px;top:258px;width:117px;height:21px;border-radius:0 4px 4px 0;line-height:17px">Atlas generation</div>

<div class="dockhdr" style="top:279px;height:26px;line-height:24px"><div class="xbtn" style="top:5px"></div>Item Properties</div>
<div class="a" style="left:1039px;top:305px;width:403px;height:18px;background:#c8c8c8;border-bottom:1px solid #a8a8a8"></div>
<div class="lbl" style="left:1044px;top:305px;font-weight:bold">Map</div>

<!-- properties scroll track -->
<div class="a" style="left:1426px;top:323px;width:16px;height:509px;background:linear-gradient(90deg,#f2f2f2,#fbfbfb 40%,#f8f8f8);border-left:1px solid #e2e2e2;border-bottom-right-radius:3px"></div>
<div class="a" style="left:1430px;top:325px;width:8px;height:395px;border-radius:4px;background:#bdbdbd"></div>

<div class="tri-d" style="left:1054px;top:335px"></div>
<div class="lbl" style="left:1073px;top:331px">Main properties</div>
<div class="a" style="left:1051px;top:350px;width:364px;height:147px;border:1px solid #c6c6c6;border-radius:5px;background:#e3e3e3"></div>
<div class="btn" style="left:1065px;top:367px;width:205px;height:21px;text-align:left;padding-left:9px;line-height:16px">Cache<svg class="a" style="left:191px;top:4px" width="8" height="12"><path d="M1 5L4 1 7 5z M1 7L4 11 7 7z" fill="#333"/></svg></div>
<div class="btn" style="left:1276px;top:366px;width:121px;height:21px">Update preview</div>
<div class="lbl" style="left:1063px;top:402px">Scale</div>
<div class="inp" style="left:1118px;top:400px;width:285px;height:21px">44982</div>
<div class="lbl" style="left:1063px;top:429px">Rotation</div>
<div class="inp" style="left:1119px;top:428px;width:267px;height:21px">0.00 degrees</div>
<div class="btn" style="left:1389px;top:428px;width:13px;height:22px;border-radius:5px"><svg class="a" style="left:2px;top:3px" width="8" height="14"><path d="M1 5L4 1 7 5z M1 9L4 13 7 9z" fill="#333"/></svg></div>
<div class="cb" style="left:1063px;top:456px;background:linear-gradient(#e4e8ee,#c8ced8);border-color:#7a8290"></div><svg class="a" style="left:1063px;top:451px" width="16" height="20"><path d="M3 11l3.5 5L13 2" fill="none" stroke="#222" stroke-width="2.2" stroke-linecap="round" stroke-linejoin="round"/></svg>
<div class="lbl" style="left:1081px;top:454px">Draw map canvas items</div>
<div class="cb" style="left:1063px;top:473px"></div>
<div class="lbl" style="left:1081px;top:471px">Lock layers for map item</div>

<div class="tri-d" style="left:1054px;top:519px"></div>
<div class="lbl" style="left:1073px;top:515px">Extents</div>
<div class="a" style="left:1051px;top:535px;width:364px;height:151px;border:1px solid #c6c6c6;border-radius:5px;background:#e3e3e3"></div>
<div class="lbl" style="left:1063px;top:548px">X min</div>
<div class="inp" style="left:1106px;top:546px;width:285px;height:21px">20.348</div>
<div class="lbl" style="left:1063px;top:575px">Y min</div>
<div class="inp" style="left:1106px;top:573px;width:285px;height:21px">-34.095</div>
<div class="lbl" style="left:1063px;top:602px">X max</div>
<div class="inp" style="left:1106px;top:600px;width:285px;height:21px">20.537</div>
<div class="lbl" style="left:1063px;top:629px">Y max</div>
<div class="inp" style="left:1106px;top:627px;width:285px;height:21px">-33.964</div>
<div class="btn" style="left:1063px;top:654px;width:340px;height:21px;line-height:16px">Set to map canvas extent</div>

<div class="tri-r" style="left:1056px;top:708px"></div>
<div class="cb" style="left:1073px;top:706px"></div>
<div class="lbl" style="left:1094px;top:705px">Show grid</div>
<div class="tri-r" style="left:1056px;top:738px"></div>
<div class="lbl" style="left:1073px;top:735px">Overview</div>
<div class="tri-r" style="left:1056px;top:771px"></div>
<div class="lbl" style="left:1073px;top:768px">Position and size</div>
<div class="tri-r" style="left:1056px;top:806px"></div>
<div class="cb" style="left:1073px;top:805px"></div>
<div class="lbl" style="left:1094px;top:804px">Frame</div>

<svg class="a" style="left:1428px;top:818px" width="14" height="14"><path d="M13 2L2 13M13 6L6 13M13 10L10 13" stroke="#555" stroke-width="1" stroke-dasharray="1 1"/></svg>
</body></html>
